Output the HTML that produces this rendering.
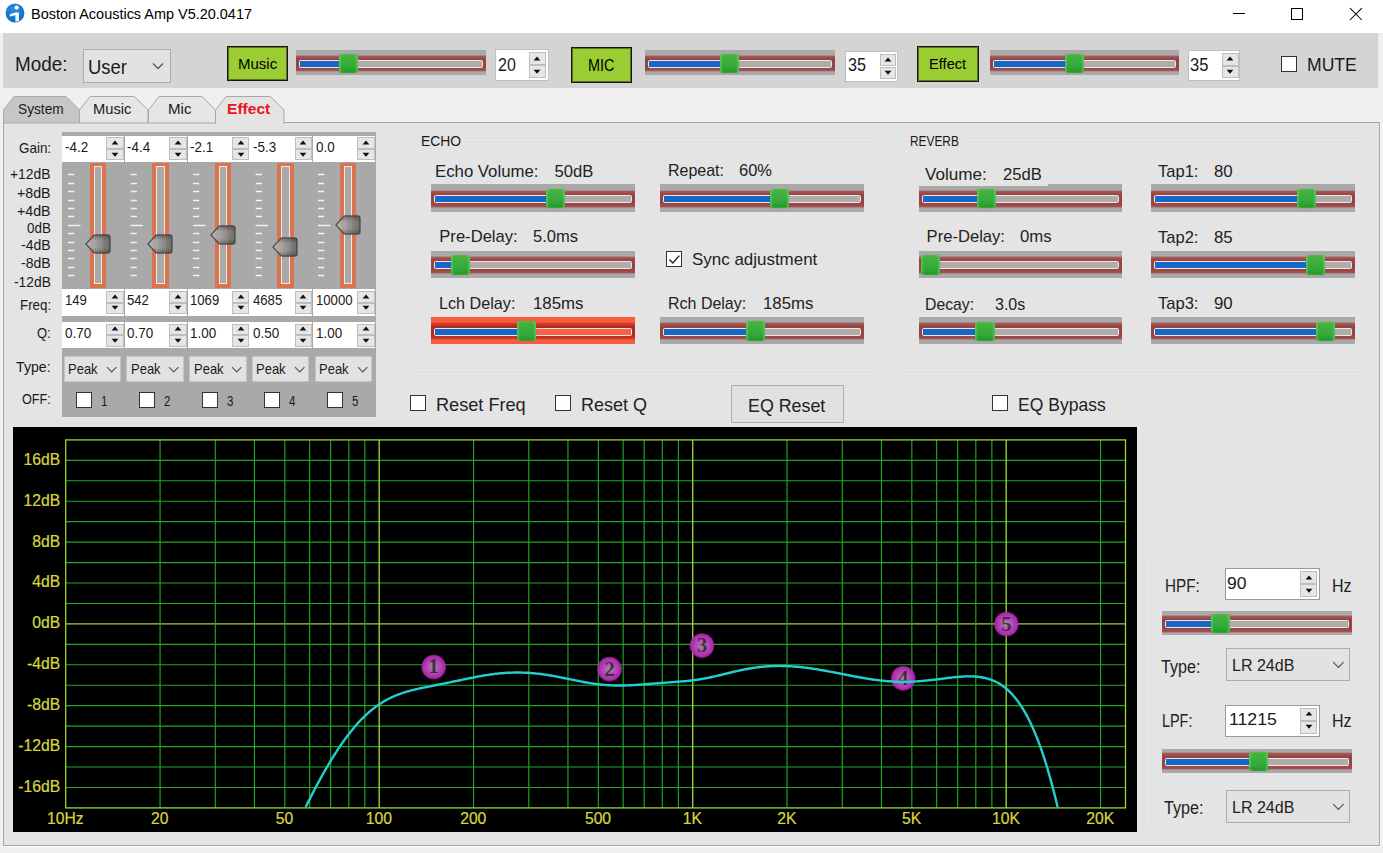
<!DOCTYPE html>
<html lang="en"><head><meta charset="utf-8"><title>Boston Acoustics Amp V5.20.0417</title>
<style>
html,body{margin:0;padding:0;}
body{width:1383px;height:853px;background:#f0f0f0;position:relative;overflow:hidden;font-family:"Liberation Sans", sans-serif;}
#app div,#app svg,#app .t{position:absolute;}
#app svg{overflow:visible;}
.t{white-space:nowrap;transform-origin:0 0;left:0;}
</style></head>
<body><div id="app">
<div style="left:0px;top:0px;width:1383px;height:33px;background:#ffffff;"></div>
<svg style="left:4.8px;top:2.9px" width="20" height="20" viewBox="0 0 20 20">
<defs><radialGradient id="ig" cx="0.45" cy="0.3" r="0.75"><stop offset="0" stop-color="#2c8ee0"/><stop offset="1" stop-color="#0c66c0"/></radialGradient></defs>
<circle cx="10" cy="10" r="9.4" fill="url(#ig)"/>
<circle cx="11.7" cy="4.6" r="2.1" fill="#fff"/>
<path d="M4.6 11.6 L10.2 9.6 L13.9 9.6 L13.9 18.2 L10.4 18.6 L10.4 12.2 L5 13.4 Z" fill="#fff"/>
</svg>
<span class="t" id="t0" style="font-size:14.7px;line-height:14.7px;color:#000;left:31.2px;top:7px;transform:scaleX(0.9842);">Boston Acoustics Amp V5.20.0417</span>
<svg style="left:1220px;top:0" width="163" height="33" viewBox="0 0 163 33">
<path d="M13 13.5 H25" stroke="#000" stroke-width="1" fill="none"/>
<rect x="71.5" y="8.5" width="11" height="11" stroke="#000" stroke-width="1" fill="none"/>
<path d="M130 8.2 L141.8 20 M141.8 8.2 L130 20" stroke="#000" stroke-width="1.05" fill="none"/>
</svg>
<div style="left:3px;top:33px;width:1375px;height:55px;background:#d4d4d4;"></div>
<span class="t" id="t1" style="font-size:21px;line-height:21px;color:#1a1a1a;left:14.7px;top:53px;transform:scaleX(0.8994);">Mode:</span>
<div style="left:83px;top:49px;width:88px;height:34px;background:#e2e2e2;border:1px solid #adadad;box-sizing:border-box;"></div>
<span class="t" id="t2" style="font-size:20.5px;line-height:20.5px;color:#1a1a1a;left:88px;top:57px;transform:scaleX(0.9008);">User</span>
<svg style="left:151px;top:62px" width="14" height="9" viewBox="0 0 14 9"><path d="M2 1.5 L7 6.5 L12 1.5" stroke="#555" stroke-width="1.3" fill="none"/></svg>
<div style="left:227.3px;top:46px;width:61.2px;height:35.4px;background:#9acd32;border:1px solid #161616;box-sizing:border-box;box-shadow:inset 0 0 0 1px rgba(25,25,25,.5);"></div>
<span class="t" id="t3" style="font-size:14.8px;line-height:14.8px;color:#000;left:238px;top:57px;transform:scaleX(1.0145);">Music</span>
<div style="left:571.3px;top:47px;width:60.8px;height:35.7px;background:#9acd32;border:1px solid #161616;box-sizing:border-box;box-shadow:inset 0 0 0 1px rgba(25,25,25,.5);"></div>
<span class="t" id="t4" style="font-size:15.6px;line-height:15.6px;color:#000;left:587.8px;top:58px;transform:scaleX(0.9233);">MIC</span>
<div style="left:917.4px;top:45.6px;width:61.2px;height:36px;background:#9acd32;border:1px solid #161616;box-sizing:border-box;box-shadow:inset 0 0 0 1px rgba(25,25,25,.5);"></div>
<span class="t" id="t5" style="font-size:14.8px;line-height:14.8px;color:#000;left:929px;top:57px;transform:scaleX(0.9899);">Effect</span>
<div style="left:296px;top:50px;width:190px;height:25px;background:#a9a9a9;"></div>
<div style="left:296px;top:55.1px;width:190px;height:16.8px;background:linear-gradient(#a9a9a9 0px,#a55a5a 1.4px,#974343 4.5px,#974343 12.0px,#a25252 15.4px,#a9a9a9 16.8px);"></div>
<div style="left:299.2px;top:59.5px;width:183.6px;height:8.6px;background:#b0acac;border:1px solid #f3e6e0;box-sizing:border-box;border-radius:1.5px;"></div>
<div style="left:300.2px;top:60.5px;width:49px;height:6.6px;background:#1468c8;"></div>
<div style="left:339.2px;top:53.7px;width:19.2px;height:19.4px;background:linear-gradient(#4ab53c 0%,#3bae3e 38%,#33a838 70%,#1f9725 100%);border-radius:3px;box-shadow:inset 1.5px 0 1.5px rgba(120,215,120,.6),inset -1.5px 0 1.5px rgba(120,215,120,.6),0 0 1px rgba(40,120,40,.7);"></div>
<div style="left:495px;top:49.2px;width:53.6px;height:32px;background:#ffffff;border:1px solid #c0c0c0;box-sizing:border-box;"></div>
<div style="left:529px;top:52.2px;width:16.8px;height:13px;background:#e6e6e6;border:1px solid #bebebe;box-sizing:border-box;"></div>
<svg style="left:533.4px;top:55.7px" width="8" height="6" viewBox="533.40 55.70 8 6"><polygon points="534.00,60.20 540.80,60.20 537.40,56.30" fill="#111"/></svg>
<div style="left:529px;top:65.2px;width:16.8px;height:13px;background:#e6e6e6;border:1px solid #bebebe;box-sizing:border-box;"></div>
<svg style="left:533.4px;top:68.7px" width="8" height="6" viewBox="533.40 68.70 8 6"><polygon points="534.00,69.50 540.80,69.50 537.40,73.40" fill="#111"/></svg>
<span class="t" id="t6" style="font-size:17.6px;line-height:17.6px;color:#1a1a1a;left:498.3px;top:57px;transform:scaleX(0.9092);">20</span>
<div style="left:644.6px;top:50px;width:190.4px;height:25px;background:#a9a9a9;"></div>
<div style="left:644.6px;top:55.1px;width:190.4px;height:16.8px;background:linear-gradient(#a9a9a9 0px,#a55a5a 1.4px,#974343 4.5px,#974343 12.0px,#a25252 15.4px,#a9a9a9 16.8px);"></div>
<div style="left:647.8px;top:59.5px;width:184px;height:8.6px;background:#b0acac;border:1px solid #f3e6e0;box-sizing:border-box;border-radius:1.5px;"></div>
<div style="left:648.8px;top:60.5px;width:80.8px;height:6.6px;background:#1468c8;"></div>
<div style="left:719.6px;top:53.7px;width:19.2px;height:19.4px;background:linear-gradient(#4ab53c 0%,#3bae3e 38%,#33a838 70%,#1f9725 100%);border-radius:3px;box-shadow:inset 1.5px 0 1.5px rgba(120,215,120,.6),inset -1.5px 0 1.5px rgba(120,215,120,.6),0 0 1px rgba(40,120,40,.7);"></div>
<div style="left:845.2px;top:50.8px;width:52.4px;height:31.4px;background:#ffffff;border:1px solid #c0c0c0;box-sizing:border-box;"></div>
<div style="left:879.5px;top:53.8px;width:16.8px;height:12.7px;background:#e6e6e6;border:1px solid #bebebe;box-sizing:border-box;"></div>
<svg style="left:883.9px;top:57.15px" width="8" height="6" viewBox="883.90 57.15 8 6"><polygon points="884.50,61.65 891.30,61.65 887.90,57.75" fill="#111"/></svg>
<div style="left:879.5px;top:66.5px;width:16.8px;height:12.7px;background:#e6e6e6;border:1px solid #bebebe;box-sizing:border-box;"></div>
<svg style="left:883.9px;top:69.85px" width="8" height="6" viewBox="883.90 69.85 8 6"><polygon points="884.50,70.65 891.30,70.65 887.90,74.55" fill="#111"/></svg>
<span class="t" id="t7" style="font-size:17.6px;line-height:17.6px;color:#1a1a1a;left:848.4px;top:57px;transform:scaleX(0.9194);">35</span>
<div style="left:989.9px;top:50px;width:189.6px;height:25px;background:#a9a9a9;"></div>
<div style="left:989.9px;top:55.1px;width:189.6px;height:16.8px;background:linear-gradient(#a9a9a9 0px,#a55a5a 1.4px,#974343 4.5px,#974343 12.0px,#a25252 15.4px,#a9a9a9 16.8px);"></div>
<div style="left:993.1px;top:59.5px;width:183.2px;height:8.6px;background:#b0acac;border:1px solid #f3e6e0;box-sizing:border-box;border-radius:1.5px;"></div>
<div style="left:994.1px;top:60.5px;width:80.9px;height:6.6px;background:#1468c8;"></div>
<div style="left:1065px;top:53.7px;width:19.2px;height:19.4px;background:linear-gradient(#4ab53c 0%,#3bae3e 38%,#33a838 70%,#1f9725 100%);border-radius:3px;box-shadow:inset 1.5px 0 1.5px rgba(120,215,120,.6),inset -1.5px 0 1.5px rgba(120,215,120,.6),0 0 1px rgba(40,120,40,.7);"></div>
<div style="left:1187.6px;top:49.8px;width:52.9px;height:31.6px;background:#ffffff;border:1px solid #c0c0c0;box-sizing:border-box;"></div>
<div style="left:1221.8px;top:52.8px;width:16.8px;height:12.8px;background:#e6e6e6;border:1px solid #bebebe;box-sizing:border-box;"></div>
<svg style="left:1226.2px;top:56.2px" width="8" height="6" viewBox="1226.20 56.20 8 6"><polygon points="1226.80,60.70 1233.60,60.70 1230.20,56.80" fill="#111"/></svg>
<div style="left:1221.8px;top:65.6px;width:16.8px;height:12.8px;background:#e6e6e6;border:1px solid #bebebe;box-sizing:border-box;"></div>
<svg style="left:1226.2px;top:69px" width="8" height="6" viewBox="1226.20 69.00 8 6"><polygon points="1226.80,69.80 1233.60,69.80 1230.20,73.70" fill="#111"/></svg>
<span class="t" id="t8" style="font-size:17.6px;line-height:17.6px;color:#1a1a1a;left:1190.4px;top:57px;transform:scaleX(0.9398);">35</span>
<div style="left:1281px;top:56px;width:16px;height:16px;background:#ffffff;border:1px solid #333;box-sizing:border-box;"></div>
<span class="t" id="t9" style="font-size:18.2px;line-height:18.2px;color:#1a1a1a;left:1307px;top:56px;transform:scaleX(0.9664);">MUTE</span>
<div style="left:3px;top:122px;width:1377px;height:724px;background:#e4e4e4;border:1px solid #a6a6a6;box-sizing:border-box;box-shadow:1px 1px 0 #fbfbfb;"></div>
<svg style="left:3px;top:95.5px" width="78" height="28.0" viewBox="0 0 78 28.0"><path d="M0.5,27.0 L0.5,14 L11,0.5 L63,0.5 L76.5,14 L76.5,27.0 Z" fill="#c6c6c6" stroke="#a8a8a8" stroke-width="1"/></svg>
<span class="t" id="t10" style="font-size:14.8px;line-height:14.8px;color:#1a1a1a;left:17.8px;top:102px;transform:scaleX(0.9262);">System</span>
<svg style="left:79px;top:95.5px" width="70.5" height="28.0" viewBox="0 0 70.5 28.0"><path d="M0.5,27.0 L0.5,14 L11,0.5 L55.5,0.5 L69.0,14 L69.0,27.0 Z" fill="#e6e6e6" stroke="#a8a8a8" stroke-width="1"/></svg>
<span class="t" id="t11" style="font-size:14.8px;line-height:14.8px;color:#1a1a1a;left:93.3px;top:102px;transform:scaleX(0.9938);">Music</span>
<svg style="left:147.5px;top:95.5px" width="69.0" height="28.0" viewBox="0 0 69.0 28.0"><path d="M0.5,27.0 L0.5,14 L11,0.5 L54.0,0.5 L67.5,14 L67.5,27.0 Z" fill="#e6e6e6" stroke="#a8a8a8" stroke-width="1"/></svg>
<span class="t" id="t12" style="font-size:14.8px;line-height:14.8px;color:#1a1a1a;left:168px;top:102px;transform:scaleX(1.0210);">Mic</span>
<svg style="left:214.5px;top:95.5px" width="70.5" height="29.0" viewBox="0 0 70.5 29.0"><path d="M0.5,28.0 L0.5,14 L11,0.5 L55.5,0.5 L69.0,14 L69.0,28.0" fill="#e4e4e4" stroke="#a8a8a8" stroke-width="1"/></svg>
<span class="t" id="t13" style="font-size:14.8px;line-height:14.8px;color:#e8141c;font-weight:bold;left:226.7px;top:102px;transform:scaleX(1.0529);">Effect</span>
<div style="left:61.5px;top:132px;width:314.5px;height:284.7px;background:#a9a9a9;"></div>
<span class="t" id="t14" style="font-size:14.8px;line-height:14.8px;color:#1a1a1a;left:18.5px;top:141px;transform:scaleX(0.9074);">Gain:</span>
<span class="t" id="t15" style="font-size:14.8px;line-height:14.8px;color:#1a1a1a;left:19.5px;top:298px;transform:scaleX(0.9002);">Freq:</span>
<span class="t" id="t16" style="font-size:14.8px;line-height:14.8px;color:#1a1a1a;left:36.9px;top:326px;transform:scaleX(0.8768);">Q:</span>
<span class="t" id="t17" style="font-size:14.8px;line-height:14.8px;color:#1a1a1a;left:15.9px;top:360px;transform:scaleX(0.9585);">Type:</span>
<span class="t" id="t18" style="font-size:14.8px;line-height:14.8px;color:#1a1a1a;left:21.7px;top:392px;transform:scaleX(0.8575);">OFF:</span>
<span class="t" id="t19" style="font-size:14.6px;line-height:14.6px;color:#1a1a1a;left:10.1px;top:167px;transform:scaleX(0.9505);">+12dB</span>
<span class="t" id="t20" style="font-size:14.6px;line-height:14.6px;color:#1a1a1a;left:17px;top:186px;transform:scaleX(0.9739);">+8dB</span>
<span class="t" id="t21" style="font-size:14.6px;line-height:14.6px;color:#1a1a1a;left:17px;top:204px;transform:scaleX(0.9739);">+4dB</span>
<span class="t" id="t22" style="font-size:14.6px;line-height:14.6px;color:#1a1a1a;left:26.7px;top:221px;transform:scaleX(0.9203);">0dB</span>
<span class="t" id="t23" style="font-size:14.6px;line-height:14.6px;color:#1a1a1a;left:21px;top:238px;transform:scaleX(0.9602);">-4dB</span>
<span class="t" id="t24" style="font-size:14.6px;line-height:14.6px;color:#1a1a1a;left:21px;top:256px;transform:scaleX(0.9602);">-8dB</span>
<span class="t" id="t25" style="font-size:14.6px;line-height:14.6px;color:#1a1a1a;left:13.7px;top:275px;transform:scaleX(0.9473);">-12dB</span>
<div style="left:62px;top:135.6px;width:62px;height:26.4px;background:#ffffff;box-sizing:border-box;"></div>
<div style="left:106.3px;top:137.1px;width:17.7px;height:11.7px;background:#e6e6e6;border:1px solid #bebebe;box-sizing:border-box;"></div>
<svg style="left:111.15px;top:139.95px" width="8" height="6" viewBox="111.15 139.95 8 6"><polygon points="111.75,144.45 118.55,144.45 115.15,140.55" fill="#111"/></svg>
<div style="left:106.3px;top:148.8px;width:17.7px;height:11.7px;background:#e6e6e6;border:1px solid #bebebe;box-sizing:border-box;"></div>
<svg style="left:111.15px;top:151.65px" width="8" height="6" viewBox="111.15 151.65 8 6"><polygon points="111.75,152.45 118.55,152.45 115.15,156.35" fill="#111"/></svg>
<span class="t" id="t26" style="font-size:15.2px;line-height:15.2px;color:#1a1a1a;left:64.6px;top:139px;transform:scaleX(0.8839);">-4.2</span>
<div style="left:62px;top:289.4px;width:62px;height:26.4px;background:#ffffff;box-sizing:border-box;"></div>
<div style="left:106.3px;top:290.9px;width:17.7px;height:11.7px;background:#e6e6e6;border:1px solid #bebebe;box-sizing:border-box;"></div>
<svg style="left:111.15px;top:293.75px" width="8" height="6" viewBox="111.15 293.75 8 6"><polygon points="111.75,298.25 118.55,298.25 115.15,294.35" fill="#111"/></svg>
<div style="left:106.3px;top:302.6px;width:17.7px;height:11.7px;background:#e6e6e6;border:1px solid #bebebe;box-sizing:border-box;"></div>
<svg style="left:111.15px;top:305.45px" width="8" height="6" viewBox="111.15 305.45 8 6"><polygon points="111.75,306.25 118.55,306.25 115.15,310.15" fill="#111"/></svg>
<span class="t" id="t27" style="font-size:15.2px;line-height:15.2px;color:#1a1a1a;left:64.6px;top:292px;transform:scaleX(0.8656);">149</span>
<div style="left:62px;top:322px;width:62px;height:26px;background:#ffffff;box-sizing:border-box;"></div>
<div style="left:106.3px;top:323.5px;width:17.7px;height:11.5px;background:#e6e6e6;border:1px solid #bebebe;box-sizing:border-box;"></div>
<svg style="left:111.15px;top:326.25px" width="8" height="6" viewBox="111.15 326.25 8 6"><polygon points="111.75,330.75 118.55,330.75 115.15,326.85" fill="#111"/></svg>
<div style="left:106.3px;top:335px;width:17.7px;height:11.5px;background:#e6e6e6;border:1px solid #bebebe;box-sizing:border-box;"></div>
<svg style="left:111.15px;top:337.75px" width="8" height="6" viewBox="111.15 337.75 8 6"><polygon points="111.75,338.55 118.55,338.55 115.15,342.45" fill="#111"/></svg>
<span class="t" id="t28" style="font-size:15.2px;line-height:15.2px;color:#1a1a1a;left:64.6px;top:325px;transform:scaleX(0.8838);">0.70</span>
<div style="left:67.7px;top:173px;width:7px;height:3px;background:rgba(255,255,255,.2);border-radius:1px;"></div>
<div style="left:68.2px;top:174px;width:6px;height:1px;background:#f3f3f3;"></div>
<div style="left:67.7px;top:182px;width:7px;height:3px;background:rgba(255,255,255,.2);border-radius:1px;"></div>
<div style="left:68.2px;top:183px;width:6px;height:1px;background:#f3f3f3;"></div>
<div style="left:67.7px;top:190px;width:7px;height:3px;background:rgba(255,255,255,.2);border-radius:1px;"></div>
<div style="left:68.2px;top:191px;width:6px;height:1px;background:#f3f3f3;"></div>
<div style="left:67.7px;top:199px;width:7px;height:3px;background:rgba(255,255,255,.2);border-radius:1px;"></div>
<div style="left:68.2px;top:200px;width:6px;height:1px;background:#f3f3f3;"></div>
<div style="left:67.7px;top:207px;width:7px;height:3px;background:rgba(255,255,255,.2);border-radius:1px;"></div>
<div style="left:68.2px;top:208px;width:6px;height:1px;background:#f3f3f3;"></div>
<div style="left:67.7px;top:215px;width:7px;height:3px;background:rgba(255,255,255,.2);border-radius:1px;"></div>
<div style="left:68.2px;top:216px;width:6px;height:1px;background:#f3f3f3;"></div>
<div style="left:67.7px;top:224px;width:13px;height:3px;background:rgba(255,255,255,.2);border-radius:1px;"></div>
<div style="left:68.2px;top:225px;width:12px;height:1px;background:#f3f3f3;"></div>
<div style="left:67.7px;top:232px;width:7px;height:3px;background:rgba(255,255,255,.2);border-radius:1px;"></div>
<div style="left:68.2px;top:233px;width:6px;height:1px;background:#f3f3f3;"></div>
<div style="left:67.7px;top:241px;width:7px;height:3px;background:rgba(255,255,255,.2);border-radius:1px;"></div>
<div style="left:68.2px;top:242px;width:6px;height:1px;background:#f3f3f3;"></div>
<div style="left:67.7px;top:249px;width:7px;height:3px;background:rgba(255,255,255,.2);border-radius:1px;"></div>
<div style="left:68.2px;top:250px;width:6px;height:1px;background:#f3f3f3;"></div>
<div style="left:67.7px;top:257px;width:7px;height:3px;background:rgba(255,255,255,.2);border-radius:1px;"></div>
<div style="left:68.2px;top:258px;width:6px;height:1px;background:#f3f3f3;"></div>
<div style="left:67.7px;top:266px;width:7px;height:3px;background:rgba(255,255,255,.2);border-radius:1px;"></div>
<div style="left:68.2px;top:267px;width:6px;height:1px;background:#f3f3f3;"></div>
<div style="left:67.7px;top:274px;width:7px;height:3px;background:rgba(255,255,255,.2);border-radius:1px;"></div>
<div style="left:68.2px;top:275px;width:6px;height:1px;background:#f3f3f3;"></div>
<div style="left:89.9px;top:162.9px;width:16.4px;height:125.3px;background:#dc7350;"></div>
<div style="left:93.8px;top:166px;width:8.6px;height:118px;background:#a9a9a9;border:1px solid #f7e8da;box-sizing:border-box;"></div>
<svg style="left:84.7px;top:233.6px" width="26" height="20" viewBox="0 0 26 20">
<defs><linearGradient id="vg0" x1="0" y1="0" x2="1" y2="0"><stop offset="0" stop-color="#bdbdbd" stop-opacity="0.9"/><stop offset="0.45" stop-color="#9a9a9a" stop-opacity="0.88"/><stop offset="1" stop-color="#666666" stop-opacity="0.93"/></linearGradient>
<linearGradient id="vh0" x1="0" y1="0" x2="0" y2="1"><stop offset="0" stop-color="#000" stop-opacity="0.28"/><stop offset="0.3" stop-color="#000" stop-opacity="0"/><stop offset="0.7" stop-color="#000" stop-opacity="0"/><stop offset="1" stop-color="#000" stop-opacity="0.28"/></linearGradient></defs>
<path d="M1 10 L8.6 1.6 Q9.3 0.9 10.4 0.9 L22.6 0.9 Q25 0.9 25 3.3 L25 16.7 Q25 19.1 22.6 19.1 L10.4 19.1 Q9.3 19.1 8.6 18.4 Z" fill="url(#vg0)"/>
<path d="M1 10 L8.6 1.6 Q9.3 0.9 10.4 0.9 L22.6 0.9 Q25 0.9 25 3.3 L25 16.7 Q25 19.1 22.6 19.1 L10.4 19.1 Q9.3 19.1 8.6 18.4 Z" fill="url(#vh0)" stroke="#3e3e3e" stroke-width="1.3" stroke-opacity="0.85"/></svg>
<div style="left:63.6px;top:355.5px;width:57.6px;height:26.4px;background:#e2e2e2;border:1px solid #c4c4c4;box-sizing:border-box;"></div>
<span class="t" id="t29" style="font-size:15px;line-height:15px;color:#1a1a1a;left:68px;top:361px;transform:scaleX(0.8654);">Peak</span>
<svg style="left:105.5px;top:366px" width="12" height="8" viewBox="0 0 12 8"><path d="M1 1.2 L5.7 5.9 L10.4 1.2" stroke="#555" stroke-width="1.1" fill="none"/></svg>
<div style="left:76.2px;top:392px;width:16px;height:16px;background:#ffffff;border:1px solid #333;box-sizing:border-box;"></div>
<span class="t" id="t30" style="font-size:15px;line-height:15px;color:#1a1a1a;left:101.2px;top:393px;transform:scaleX(0.7670);">1</span>
<div style="left:124.75px;top:135.6px;width:62px;height:26.4px;background:#ffffff;box-sizing:border-box;"></div>
<div style="left:169.05px;top:137.1px;width:17.7px;height:11.7px;background:#e6e6e6;border:1px solid #bebebe;box-sizing:border-box;"></div>
<svg style="left:173.9px;top:139.95px" width="8" height="6" viewBox="173.90 139.95 8 6"><polygon points="174.50,144.45 181.30,144.45 177.90,140.55" fill="#111"/></svg>
<div style="left:169.05px;top:148.8px;width:17.7px;height:11.7px;background:#e6e6e6;border:1px solid #bebebe;box-sizing:border-box;"></div>
<svg style="left:173.9px;top:151.65px" width="8" height="6" viewBox="173.90 151.65 8 6"><polygon points="174.50,152.45 181.30,152.45 177.90,156.35" fill="#111"/></svg>
<span class="t" id="t31" style="font-size:15.2px;line-height:15.2px;color:#1a1a1a;left:127.35px;top:139px;transform:scaleX(0.8839);">-4.4</span>
<div style="left:124.75px;top:289.4px;width:62px;height:26.4px;background:#ffffff;box-sizing:border-box;"></div>
<div style="left:169.05px;top:290.9px;width:17.7px;height:11.7px;background:#e6e6e6;border:1px solid #bebebe;box-sizing:border-box;"></div>
<svg style="left:173.9px;top:293.75px" width="8" height="6" viewBox="173.90 293.75 8 6"><polygon points="174.50,298.25 181.30,298.25 177.90,294.35" fill="#111"/></svg>
<div style="left:169.05px;top:302.6px;width:17.7px;height:11.7px;background:#e6e6e6;border:1px solid #bebebe;box-sizing:border-box;"></div>
<svg style="left:173.9px;top:305.45px" width="8" height="6" viewBox="173.90 305.45 8 6"><polygon points="174.50,306.25 181.30,306.25 177.90,310.15" fill="#111"/></svg>
<span class="t" id="t32" style="font-size:15.2px;line-height:15.2px;color:#1a1a1a;left:127.35px;top:292px;transform:scaleX(0.8656);">542</span>
<div style="left:124.75px;top:322px;width:62px;height:26px;background:#ffffff;box-sizing:border-box;"></div>
<div style="left:169.05px;top:323.5px;width:17.7px;height:11.5px;background:#e6e6e6;border:1px solid #bebebe;box-sizing:border-box;"></div>
<svg style="left:173.9px;top:326.25px" width="8" height="6" viewBox="173.90 326.25 8 6"><polygon points="174.50,330.75 181.30,330.75 177.90,326.85" fill="#111"/></svg>
<div style="left:169.05px;top:335px;width:17.7px;height:11.5px;background:#e6e6e6;border:1px solid #bebebe;box-sizing:border-box;"></div>
<svg style="left:173.9px;top:337.75px" width="8" height="6" viewBox="173.90 337.75 8 6"><polygon points="174.50,338.55 181.30,338.55 177.90,342.45" fill="#111"/></svg>
<span class="t" id="t33" style="font-size:15.2px;line-height:15.2px;color:#1a1a1a;left:127.35px;top:325px;transform:scaleX(0.8838);">0.70</span>
<div style="left:130.2px;top:173px;width:7px;height:3px;background:rgba(255,255,255,.2);border-radius:1px;"></div>
<div style="left:130.7px;top:174px;width:6px;height:1px;background:#f3f3f3;"></div>
<div style="left:130.2px;top:182px;width:7px;height:3px;background:rgba(255,255,255,.2);border-radius:1px;"></div>
<div style="left:130.7px;top:183px;width:6px;height:1px;background:#f3f3f3;"></div>
<div style="left:130.2px;top:190px;width:7px;height:3px;background:rgba(255,255,255,.2);border-radius:1px;"></div>
<div style="left:130.7px;top:191px;width:6px;height:1px;background:#f3f3f3;"></div>
<div style="left:130.2px;top:199px;width:7px;height:3px;background:rgba(255,255,255,.2);border-radius:1px;"></div>
<div style="left:130.7px;top:200px;width:6px;height:1px;background:#f3f3f3;"></div>
<div style="left:130.2px;top:207px;width:7px;height:3px;background:rgba(255,255,255,.2);border-radius:1px;"></div>
<div style="left:130.7px;top:208px;width:6px;height:1px;background:#f3f3f3;"></div>
<div style="left:130.2px;top:215px;width:7px;height:3px;background:rgba(255,255,255,.2);border-radius:1px;"></div>
<div style="left:130.7px;top:216px;width:6px;height:1px;background:#f3f3f3;"></div>
<div style="left:130.2px;top:224px;width:13px;height:3px;background:rgba(255,255,255,.2);border-radius:1px;"></div>
<div style="left:130.7px;top:225px;width:12px;height:1px;background:#f3f3f3;"></div>
<div style="left:130.2px;top:232px;width:7px;height:3px;background:rgba(255,255,255,.2);border-radius:1px;"></div>
<div style="left:130.7px;top:233px;width:6px;height:1px;background:#f3f3f3;"></div>
<div style="left:130.2px;top:241px;width:7px;height:3px;background:rgba(255,255,255,.2);border-radius:1px;"></div>
<div style="left:130.7px;top:242px;width:6px;height:1px;background:#f3f3f3;"></div>
<div style="left:130.2px;top:249px;width:7px;height:3px;background:rgba(255,255,255,.2);border-radius:1px;"></div>
<div style="left:130.7px;top:250px;width:6px;height:1px;background:#f3f3f3;"></div>
<div style="left:130.2px;top:257px;width:7px;height:3px;background:rgba(255,255,255,.2);border-radius:1px;"></div>
<div style="left:130.7px;top:258px;width:6px;height:1px;background:#f3f3f3;"></div>
<div style="left:130.2px;top:266px;width:7px;height:3px;background:rgba(255,255,255,.2);border-radius:1px;"></div>
<div style="left:130.7px;top:267px;width:6px;height:1px;background:#f3f3f3;"></div>
<div style="left:130.2px;top:274px;width:7px;height:3px;background:rgba(255,255,255,.2);border-radius:1px;"></div>
<div style="left:130.7px;top:275px;width:6px;height:1px;background:#f3f3f3;"></div>
<div style="left:152.35px;top:162.9px;width:16.4px;height:125.3px;background:#dc7350;"></div>
<div style="left:156.25px;top:166px;width:8.6px;height:118px;background:#a9a9a9;border:1px solid #f7e8da;box-sizing:border-box;"></div>
<svg style="left:147.15px;top:233.6px" width="26" height="20" viewBox="0 0 26 20">
<defs><linearGradient id="vg1" x1="0" y1="0" x2="1" y2="0"><stop offset="0" stop-color="#bdbdbd" stop-opacity="0.9"/><stop offset="0.45" stop-color="#9a9a9a" stop-opacity="0.88"/><stop offset="1" stop-color="#666666" stop-opacity="0.93"/></linearGradient>
<linearGradient id="vh1" x1="0" y1="0" x2="0" y2="1"><stop offset="0" stop-color="#000" stop-opacity="0.28"/><stop offset="0.3" stop-color="#000" stop-opacity="0"/><stop offset="0.7" stop-color="#000" stop-opacity="0"/><stop offset="1" stop-color="#000" stop-opacity="0.28"/></linearGradient></defs>
<path d="M1 10 L8.6 1.6 Q9.3 0.9 10.4 0.9 L22.6 0.9 Q25 0.9 25 3.3 L25 16.7 Q25 19.1 22.6 19.1 L10.4 19.1 Q9.3 19.1 8.6 18.4 Z" fill="url(#vg1)"/>
<path d="M1 10 L8.6 1.6 Q9.3 0.9 10.4 0.9 L22.6 0.9 Q25 0.9 25 3.3 L25 16.7 Q25 19.1 22.6 19.1 L10.4 19.1 Q9.3 19.1 8.6 18.4 Z" fill="url(#vh1)" stroke="#3e3e3e" stroke-width="1.3" stroke-opacity="0.85"/></svg>
<div style="left:126.35px;top:355.5px;width:57.6px;height:26.4px;background:#e2e2e2;border:1px solid #c4c4c4;box-sizing:border-box;"></div>
<span class="t" id="t34" style="font-size:15px;line-height:15px;color:#1a1a1a;left:130.75px;top:361px;transform:scaleX(0.8654);">Peak</span>
<svg style="left:168.25px;top:366px" width="12" height="8" viewBox="0 0 12 8"><path d="M1 1.2 L5.7 5.9 L10.4 1.2" stroke="#555" stroke-width="1.1" fill="none"/></svg>
<div style="left:138.95px;top:392px;width:16px;height:16px;background:#ffffff;border:1px solid #333;box-sizing:border-box;"></div>
<span class="t" id="t35" style="font-size:15px;line-height:15px;color:#1a1a1a;left:163.95px;top:393px;transform:scaleX(0.7670);">2</span>
<div style="left:187.5px;top:135.6px;width:62px;height:26.4px;background:#ffffff;box-sizing:border-box;"></div>
<div style="left:231.8px;top:137.1px;width:17.7px;height:11.7px;background:#e6e6e6;border:1px solid #bebebe;box-sizing:border-box;"></div>
<svg style="left:236.65px;top:139.95px" width="8" height="6" viewBox="236.65 139.95 8 6"><polygon points="237.25,144.45 244.05,144.45 240.65,140.55" fill="#111"/></svg>
<div style="left:231.8px;top:148.8px;width:17.7px;height:11.7px;background:#e6e6e6;border:1px solid #bebebe;box-sizing:border-box;"></div>
<svg style="left:236.65px;top:151.65px" width="8" height="6" viewBox="236.65 151.65 8 6"><polygon points="237.25,152.45 244.05,152.45 240.65,156.35" fill="#111"/></svg>
<span class="t" id="t36" style="font-size:15.2px;line-height:15.2px;color:#1a1a1a;left:190.1px;top:139px;transform:scaleX(0.8839);">-2.1</span>
<div style="left:187.5px;top:289.4px;width:62px;height:26.4px;background:#ffffff;box-sizing:border-box;"></div>
<div style="left:231.8px;top:290.9px;width:17.7px;height:11.7px;background:#e6e6e6;border:1px solid #bebebe;box-sizing:border-box;"></div>
<svg style="left:236.65px;top:293.75px" width="8" height="6" viewBox="236.65 293.75 8 6"><polygon points="237.25,298.25 244.05,298.25 240.65,294.35" fill="#111"/></svg>
<div style="left:231.8px;top:302.6px;width:17.7px;height:11.7px;background:#e6e6e6;border:1px solid #bebebe;box-sizing:border-box;"></div>
<svg style="left:236.65px;top:305.45px" width="8" height="6" viewBox="236.65 305.45 8 6"><polygon points="237.25,306.25 244.05,306.25 240.65,310.15" fill="#111"/></svg>
<span class="t" id="t37" style="font-size:15.2px;line-height:15.2px;color:#1a1a1a;left:190.1px;top:292px;transform:scaleX(0.8655);">1069</span>
<div style="left:187.5px;top:322px;width:62px;height:26px;background:#ffffff;box-sizing:border-box;"></div>
<div style="left:231.8px;top:323.5px;width:17.7px;height:11.5px;background:#e6e6e6;border:1px solid #bebebe;box-sizing:border-box;"></div>
<svg style="left:236.65px;top:326.25px" width="8" height="6" viewBox="236.65 326.25 8 6"><polygon points="237.25,330.75 244.05,330.75 240.65,326.85" fill="#111"/></svg>
<div style="left:231.8px;top:335px;width:17.7px;height:11.5px;background:#e6e6e6;border:1px solid #bebebe;box-sizing:border-box;"></div>
<svg style="left:236.65px;top:337.75px" width="8" height="6" viewBox="236.65 337.75 8 6"><polygon points="237.25,338.55 244.05,338.55 240.65,342.45" fill="#111"/></svg>
<span class="t" id="t38" style="font-size:15.2px;line-height:15.2px;color:#1a1a1a;left:190.1px;top:325px;transform:scaleX(0.8838);">1.00</span>
<div style="left:192.7px;top:173px;width:7px;height:3px;background:rgba(255,255,255,.2);border-radius:1px;"></div>
<div style="left:193.2px;top:174px;width:6px;height:1px;background:#f3f3f3;"></div>
<div style="left:192.7px;top:182px;width:7px;height:3px;background:rgba(255,255,255,.2);border-radius:1px;"></div>
<div style="left:193.2px;top:183px;width:6px;height:1px;background:#f3f3f3;"></div>
<div style="left:192.7px;top:190px;width:7px;height:3px;background:rgba(255,255,255,.2);border-radius:1px;"></div>
<div style="left:193.2px;top:191px;width:6px;height:1px;background:#f3f3f3;"></div>
<div style="left:192.7px;top:199px;width:7px;height:3px;background:rgba(255,255,255,.2);border-radius:1px;"></div>
<div style="left:193.2px;top:200px;width:6px;height:1px;background:#f3f3f3;"></div>
<div style="left:192.7px;top:207px;width:7px;height:3px;background:rgba(255,255,255,.2);border-radius:1px;"></div>
<div style="left:193.2px;top:208px;width:6px;height:1px;background:#f3f3f3;"></div>
<div style="left:192.7px;top:215px;width:7px;height:3px;background:rgba(255,255,255,.2);border-radius:1px;"></div>
<div style="left:193.2px;top:216px;width:6px;height:1px;background:#f3f3f3;"></div>
<div style="left:192.7px;top:224px;width:13px;height:3px;background:rgba(255,255,255,.2);border-radius:1px;"></div>
<div style="left:193.2px;top:225px;width:12px;height:1px;background:#f3f3f3;"></div>
<div style="left:192.7px;top:232px;width:7px;height:3px;background:rgba(255,255,255,.2);border-radius:1px;"></div>
<div style="left:193.2px;top:233px;width:6px;height:1px;background:#f3f3f3;"></div>
<div style="left:192.7px;top:241px;width:7px;height:3px;background:rgba(255,255,255,.2);border-radius:1px;"></div>
<div style="left:193.2px;top:242px;width:6px;height:1px;background:#f3f3f3;"></div>
<div style="left:192.7px;top:249px;width:7px;height:3px;background:rgba(255,255,255,.2);border-radius:1px;"></div>
<div style="left:193.2px;top:250px;width:6px;height:1px;background:#f3f3f3;"></div>
<div style="left:192.7px;top:257px;width:7px;height:3px;background:rgba(255,255,255,.2);border-radius:1px;"></div>
<div style="left:193.2px;top:258px;width:6px;height:1px;background:#f3f3f3;"></div>
<div style="left:192.7px;top:266px;width:7px;height:3px;background:rgba(255,255,255,.2);border-radius:1px;"></div>
<div style="left:193.2px;top:267px;width:6px;height:1px;background:#f3f3f3;"></div>
<div style="left:192.7px;top:274px;width:7px;height:3px;background:rgba(255,255,255,.2);border-radius:1px;"></div>
<div style="left:193.2px;top:275px;width:6px;height:1px;background:#f3f3f3;"></div>
<div style="left:214.8px;top:162.9px;width:16.4px;height:125.3px;background:#dc7350;"></div>
<div style="left:218.7px;top:166px;width:8.6px;height:118px;background:#a9a9a9;border:1px solid #f7e8da;box-sizing:border-box;"></div>
<svg style="left:209.6px;top:224.9px" width="26" height="20" viewBox="0 0 26 20">
<defs><linearGradient id="vg2" x1="0" y1="0" x2="1" y2="0"><stop offset="0" stop-color="#bdbdbd" stop-opacity="0.9"/><stop offset="0.45" stop-color="#9a9a9a" stop-opacity="0.88"/><stop offset="1" stop-color="#666666" stop-opacity="0.93"/></linearGradient>
<linearGradient id="vh2" x1="0" y1="0" x2="0" y2="1"><stop offset="0" stop-color="#000" stop-opacity="0.28"/><stop offset="0.3" stop-color="#000" stop-opacity="0"/><stop offset="0.7" stop-color="#000" stop-opacity="0"/><stop offset="1" stop-color="#000" stop-opacity="0.28"/></linearGradient></defs>
<path d="M1 10 L8.6 1.6 Q9.3 0.9 10.4 0.9 L22.6 0.9 Q25 0.9 25 3.3 L25 16.7 Q25 19.1 22.6 19.1 L10.4 19.1 Q9.3 19.1 8.6 18.4 Z" fill="url(#vg2)"/>
<path d="M1 10 L8.6 1.6 Q9.3 0.9 10.4 0.9 L22.6 0.9 Q25 0.9 25 3.3 L25 16.7 Q25 19.1 22.6 19.1 L10.4 19.1 Q9.3 19.1 8.6 18.4 Z" fill="url(#vh2)" stroke="#3e3e3e" stroke-width="1.3" stroke-opacity="0.85"/></svg>
<div style="left:189.1px;top:355.5px;width:57.6px;height:26.4px;background:#e2e2e2;border:1px solid #c4c4c4;box-sizing:border-box;"></div>
<span class="t" id="t39" style="font-size:15px;line-height:15px;color:#1a1a1a;left:193.5px;top:361px;transform:scaleX(0.8654);">Peak</span>
<svg style="left:231px;top:366px" width="12" height="8" viewBox="0 0 12 8"><path d="M1 1.2 L5.7 5.9 L10.4 1.2" stroke="#555" stroke-width="1.1" fill="none"/></svg>
<div style="left:201.7px;top:392px;width:16px;height:16px;background:#ffffff;border:1px solid #333;box-sizing:border-box;"></div>
<span class="t" id="t40" style="font-size:15px;line-height:15px;color:#1a1a1a;left:226.7px;top:393px;transform:scaleX(0.7670);">3</span>
<div style="left:250.25px;top:135.6px;width:62px;height:26.4px;background:#ffffff;box-sizing:border-box;"></div>
<div style="left:294.55px;top:137.1px;width:17.7px;height:11.7px;background:#e6e6e6;border:1px solid #bebebe;box-sizing:border-box;"></div>
<svg style="left:299.4px;top:139.95px" width="8" height="6" viewBox="299.40 139.95 8 6"><polygon points="300.00,144.45 306.80,144.45 303.40,140.55" fill="#111"/></svg>
<div style="left:294.55px;top:148.8px;width:17.7px;height:11.7px;background:#e6e6e6;border:1px solid #bebebe;box-sizing:border-box;"></div>
<svg style="left:299.4px;top:151.65px" width="8" height="6" viewBox="299.40 151.65 8 6"><polygon points="300.00,152.45 306.80,152.45 303.40,156.35" fill="#111"/></svg>
<span class="t" id="t41" style="font-size:15.2px;line-height:15.2px;color:#1a1a1a;left:252.85px;top:139px;transform:scaleX(0.8839);">-5.3</span>
<div style="left:250.25px;top:289.4px;width:62px;height:26.4px;background:#ffffff;box-sizing:border-box;"></div>
<div style="left:294.55px;top:290.9px;width:17.7px;height:11.7px;background:#e6e6e6;border:1px solid #bebebe;box-sizing:border-box;"></div>
<svg style="left:299.4px;top:293.75px" width="8" height="6" viewBox="299.40 293.75 8 6"><polygon points="300.00,298.25 306.80,298.25 303.40,294.35" fill="#111"/></svg>
<div style="left:294.55px;top:302.6px;width:17.7px;height:11.7px;background:#e6e6e6;border:1px solid #bebebe;box-sizing:border-box;"></div>
<svg style="left:299.4px;top:305.45px" width="8" height="6" viewBox="299.40 305.45 8 6"><polygon points="300.00,306.25 306.80,306.25 303.40,310.15" fill="#111"/></svg>
<span class="t" id="t42" style="font-size:15.2px;line-height:15.2px;color:#1a1a1a;left:252.85px;top:292px;transform:scaleX(0.8655);">4685</span>
<div style="left:250.25px;top:322px;width:62px;height:26px;background:#ffffff;box-sizing:border-box;"></div>
<div style="left:294.55px;top:323.5px;width:17.7px;height:11.5px;background:#e6e6e6;border:1px solid #bebebe;box-sizing:border-box;"></div>
<svg style="left:299.4px;top:326.25px" width="8" height="6" viewBox="299.40 326.25 8 6"><polygon points="300.00,330.75 306.80,330.75 303.40,326.85" fill="#111"/></svg>
<div style="left:294.55px;top:335px;width:17.7px;height:11.5px;background:#e6e6e6;border:1px solid #bebebe;box-sizing:border-box;"></div>
<svg style="left:299.4px;top:337.75px" width="8" height="6" viewBox="299.40 337.75 8 6"><polygon points="300.00,338.55 306.80,338.55 303.40,342.45" fill="#111"/></svg>
<span class="t" id="t43" style="font-size:15.2px;line-height:15.2px;color:#1a1a1a;left:252.85px;top:325px;transform:scaleX(0.8838);">0.50</span>
<div style="left:255.2px;top:173px;width:7px;height:3px;background:rgba(255,255,255,.2);border-radius:1px;"></div>
<div style="left:255.7px;top:174px;width:6px;height:1px;background:#f3f3f3;"></div>
<div style="left:255.2px;top:182px;width:7px;height:3px;background:rgba(255,255,255,.2);border-radius:1px;"></div>
<div style="left:255.7px;top:183px;width:6px;height:1px;background:#f3f3f3;"></div>
<div style="left:255.2px;top:190px;width:7px;height:3px;background:rgba(255,255,255,.2);border-radius:1px;"></div>
<div style="left:255.7px;top:191px;width:6px;height:1px;background:#f3f3f3;"></div>
<div style="left:255.2px;top:199px;width:7px;height:3px;background:rgba(255,255,255,.2);border-radius:1px;"></div>
<div style="left:255.7px;top:200px;width:6px;height:1px;background:#f3f3f3;"></div>
<div style="left:255.2px;top:207px;width:7px;height:3px;background:rgba(255,255,255,.2);border-radius:1px;"></div>
<div style="left:255.7px;top:208px;width:6px;height:1px;background:#f3f3f3;"></div>
<div style="left:255.2px;top:215px;width:7px;height:3px;background:rgba(255,255,255,.2);border-radius:1px;"></div>
<div style="left:255.7px;top:216px;width:6px;height:1px;background:#f3f3f3;"></div>
<div style="left:255.2px;top:224px;width:13px;height:3px;background:rgba(255,255,255,.2);border-radius:1px;"></div>
<div style="left:255.7px;top:225px;width:12px;height:1px;background:#f3f3f3;"></div>
<div style="left:255.2px;top:232px;width:7px;height:3px;background:rgba(255,255,255,.2);border-radius:1px;"></div>
<div style="left:255.7px;top:233px;width:6px;height:1px;background:#f3f3f3;"></div>
<div style="left:255.2px;top:241px;width:7px;height:3px;background:rgba(255,255,255,.2);border-radius:1px;"></div>
<div style="left:255.7px;top:242px;width:6px;height:1px;background:#f3f3f3;"></div>
<div style="left:255.2px;top:249px;width:7px;height:3px;background:rgba(255,255,255,.2);border-radius:1px;"></div>
<div style="left:255.7px;top:250px;width:6px;height:1px;background:#f3f3f3;"></div>
<div style="left:255.2px;top:257px;width:7px;height:3px;background:rgba(255,255,255,.2);border-radius:1px;"></div>
<div style="left:255.7px;top:258px;width:6px;height:1px;background:#f3f3f3;"></div>
<div style="left:255.2px;top:266px;width:7px;height:3px;background:rgba(255,255,255,.2);border-radius:1px;"></div>
<div style="left:255.7px;top:267px;width:6px;height:1px;background:#f3f3f3;"></div>
<div style="left:255.2px;top:274px;width:7px;height:3px;background:rgba(255,255,255,.2);border-radius:1px;"></div>
<div style="left:255.7px;top:275px;width:6px;height:1px;background:#f3f3f3;"></div>
<div style="left:277.25px;top:162.9px;width:16.4px;height:125.3px;background:#dc7350;"></div>
<div style="left:281.15px;top:166px;width:8.6px;height:118px;background:#a9a9a9;border:1px solid #f7e8da;box-sizing:border-box;"></div>
<svg style="left:272.05px;top:237.4px" width="26" height="20" viewBox="0 0 26 20">
<defs><linearGradient id="vg3" x1="0" y1="0" x2="1" y2="0"><stop offset="0" stop-color="#bdbdbd" stop-opacity="0.9"/><stop offset="0.45" stop-color="#9a9a9a" stop-opacity="0.88"/><stop offset="1" stop-color="#666666" stop-opacity="0.93"/></linearGradient>
<linearGradient id="vh3" x1="0" y1="0" x2="0" y2="1"><stop offset="0" stop-color="#000" stop-opacity="0.28"/><stop offset="0.3" stop-color="#000" stop-opacity="0"/><stop offset="0.7" stop-color="#000" stop-opacity="0"/><stop offset="1" stop-color="#000" stop-opacity="0.28"/></linearGradient></defs>
<path d="M1 10 L8.6 1.6 Q9.3 0.9 10.4 0.9 L22.6 0.9 Q25 0.9 25 3.3 L25 16.7 Q25 19.1 22.6 19.1 L10.4 19.1 Q9.3 19.1 8.6 18.4 Z" fill="url(#vg3)"/>
<path d="M1 10 L8.6 1.6 Q9.3 0.9 10.4 0.9 L22.6 0.9 Q25 0.9 25 3.3 L25 16.7 Q25 19.1 22.6 19.1 L10.4 19.1 Q9.3 19.1 8.6 18.4 Z" fill="url(#vh3)" stroke="#3e3e3e" stroke-width="1.3" stroke-opacity="0.85"/></svg>
<div style="left:251.85px;top:355.5px;width:57.6px;height:26.4px;background:#e2e2e2;border:1px solid #c4c4c4;box-sizing:border-box;"></div>
<span class="t" id="t44" style="font-size:15px;line-height:15px;color:#1a1a1a;left:256.25px;top:361px;transform:scaleX(0.8654);">Peak</span>
<svg style="left:293.75px;top:366px" width="12" height="8" viewBox="0 0 12 8"><path d="M1 1.2 L5.7 5.9 L10.4 1.2" stroke="#555" stroke-width="1.1" fill="none"/></svg>
<div style="left:264.45px;top:392px;width:16px;height:16px;background:#ffffff;border:1px solid #333;box-sizing:border-box;"></div>
<span class="t" id="t45" style="font-size:15px;line-height:15px;color:#1a1a1a;left:289.45px;top:393px;transform:scaleX(0.7670);">4</span>
<div style="left:313px;top:135.6px;width:62px;height:26.4px;background:#ffffff;box-sizing:border-box;"></div>
<div style="left:357.3px;top:137.1px;width:17.7px;height:11.7px;background:#e6e6e6;border:1px solid #bebebe;box-sizing:border-box;"></div>
<svg style="left:362.15px;top:139.95px" width="8" height="6" viewBox="362.15 139.95 8 6"><polygon points="362.75,144.45 369.55,144.45 366.15,140.55" fill="#111"/></svg>
<div style="left:357.3px;top:148.8px;width:17.7px;height:11.7px;background:#e6e6e6;border:1px solid #bebebe;box-sizing:border-box;"></div>
<svg style="left:362.15px;top:151.65px" width="8" height="6" viewBox="362.15 151.65 8 6"><polygon points="362.75,152.45 369.55,152.45 366.15,156.35" fill="#111"/></svg>
<span class="t" id="t46" style="font-size:15.2px;line-height:15.2px;color:#1a1a1a;left:315.6px;top:139px;transform:scaleX(0.8834);">0.0</span>
<div style="left:313px;top:289.4px;width:62px;height:26.4px;background:#ffffff;box-sizing:border-box;"></div>
<div style="left:357.3px;top:290.9px;width:17.7px;height:11.7px;background:#e6e6e6;border:1px solid #bebebe;box-sizing:border-box;"></div>
<svg style="left:362.15px;top:293.75px" width="8" height="6" viewBox="362.15 293.75 8 6"><polygon points="362.75,298.25 369.55,298.25 366.15,294.35" fill="#111"/></svg>
<div style="left:357.3px;top:302.6px;width:17.7px;height:11.7px;background:#e6e6e6;border:1px solid #bebebe;box-sizing:border-box;"></div>
<svg style="left:362.15px;top:305.45px" width="8" height="6" viewBox="362.15 305.45 8 6"><polygon points="362.75,306.25 369.55,306.25 366.15,310.15" fill="#111"/></svg>
<span class="t" id="t47" style="font-size:15.2px;line-height:15.2px;color:#1a1a1a;left:315.6px;top:292px;transform:scaleX(0.8657);">10000</span>
<div style="left:313px;top:322px;width:62px;height:26px;background:#ffffff;box-sizing:border-box;"></div>
<div style="left:357.3px;top:323.5px;width:17.7px;height:11.5px;background:#e6e6e6;border:1px solid #bebebe;box-sizing:border-box;"></div>
<svg style="left:362.15px;top:326.25px" width="8" height="6" viewBox="362.15 326.25 8 6"><polygon points="362.75,330.75 369.55,330.75 366.15,326.85" fill="#111"/></svg>
<div style="left:357.3px;top:335px;width:17.7px;height:11.5px;background:#e6e6e6;border:1px solid #bebebe;box-sizing:border-box;"></div>
<svg style="left:362.15px;top:337.75px" width="8" height="6" viewBox="362.15 337.75 8 6"><polygon points="362.75,338.55 369.55,338.55 366.15,342.45" fill="#111"/></svg>
<span class="t" id="t48" style="font-size:15.2px;line-height:15.2px;color:#1a1a1a;left:315.6px;top:325px;transform:scaleX(0.8838);">1.00</span>
<div style="left:317.7px;top:173px;width:7px;height:3px;background:rgba(255,255,255,.2);border-radius:1px;"></div>
<div style="left:318.2px;top:174px;width:6px;height:1px;background:#f3f3f3;"></div>
<div style="left:317.7px;top:182px;width:7px;height:3px;background:rgba(255,255,255,.2);border-radius:1px;"></div>
<div style="left:318.2px;top:183px;width:6px;height:1px;background:#f3f3f3;"></div>
<div style="left:317.7px;top:190px;width:7px;height:3px;background:rgba(255,255,255,.2);border-radius:1px;"></div>
<div style="left:318.2px;top:191px;width:6px;height:1px;background:#f3f3f3;"></div>
<div style="left:317.7px;top:199px;width:7px;height:3px;background:rgba(255,255,255,.2);border-radius:1px;"></div>
<div style="left:318.2px;top:200px;width:6px;height:1px;background:#f3f3f3;"></div>
<div style="left:317.7px;top:207px;width:7px;height:3px;background:rgba(255,255,255,.2);border-radius:1px;"></div>
<div style="left:318.2px;top:208px;width:6px;height:1px;background:#f3f3f3;"></div>
<div style="left:317.7px;top:215px;width:7px;height:3px;background:rgba(255,255,255,.2);border-radius:1px;"></div>
<div style="left:318.2px;top:216px;width:6px;height:1px;background:#f3f3f3;"></div>
<div style="left:317.7px;top:224px;width:13px;height:3px;background:rgba(255,255,255,.2);border-radius:1px;"></div>
<div style="left:318.2px;top:225px;width:12px;height:1px;background:#f3f3f3;"></div>
<div style="left:317.7px;top:232px;width:7px;height:3px;background:rgba(255,255,255,.2);border-radius:1px;"></div>
<div style="left:318.2px;top:233px;width:6px;height:1px;background:#f3f3f3;"></div>
<div style="left:317.7px;top:241px;width:7px;height:3px;background:rgba(255,255,255,.2);border-radius:1px;"></div>
<div style="left:318.2px;top:242px;width:6px;height:1px;background:#f3f3f3;"></div>
<div style="left:317.7px;top:249px;width:7px;height:3px;background:rgba(255,255,255,.2);border-radius:1px;"></div>
<div style="left:318.2px;top:250px;width:6px;height:1px;background:#f3f3f3;"></div>
<div style="left:317.7px;top:257px;width:7px;height:3px;background:rgba(255,255,255,.2);border-radius:1px;"></div>
<div style="left:318.2px;top:258px;width:6px;height:1px;background:#f3f3f3;"></div>
<div style="left:317.7px;top:266px;width:7px;height:3px;background:rgba(255,255,255,.2);border-radius:1px;"></div>
<div style="left:318.2px;top:267px;width:6px;height:1px;background:#f3f3f3;"></div>
<div style="left:317.7px;top:274px;width:7px;height:3px;background:rgba(255,255,255,.2);border-radius:1px;"></div>
<div style="left:318.2px;top:275px;width:6px;height:1px;background:#f3f3f3;"></div>
<div style="left:339.7px;top:162.9px;width:16.4px;height:125.3px;background:#dc7350;"></div>
<div style="left:343.6px;top:166px;width:8.6px;height:118px;background:#a9a9a9;border:1px solid #f7e8da;box-sizing:border-box;"></div>
<svg style="left:334.5px;top:214.8px" width="26" height="20" viewBox="0 0 26 20">
<defs><linearGradient id="vg4" x1="0" y1="0" x2="1" y2="0"><stop offset="0" stop-color="#bdbdbd" stop-opacity="0.9"/><stop offset="0.45" stop-color="#9a9a9a" stop-opacity="0.88"/><stop offset="1" stop-color="#666666" stop-opacity="0.93"/></linearGradient>
<linearGradient id="vh4" x1="0" y1="0" x2="0" y2="1"><stop offset="0" stop-color="#000" stop-opacity="0.28"/><stop offset="0.3" stop-color="#000" stop-opacity="0"/><stop offset="0.7" stop-color="#000" stop-opacity="0"/><stop offset="1" stop-color="#000" stop-opacity="0.28"/></linearGradient></defs>
<path d="M1 10 L8.6 1.6 Q9.3 0.9 10.4 0.9 L22.6 0.9 Q25 0.9 25 3.3 L25 16.7 Q25 19.1 22.6 19.1 L10.4 19.1 Q9.3 19.1 8.6 18.4 Z" fill="url(#vg4)"/>
<path d="M1 10 L8.6 1.6 Q9.3 0.9 10.4 0.9 L22.6 0.9 Q25 0.9 25 3.3 L25 16.7 Q25 19.1 22.6 19.1 L10.4 19.1 Q9.3 19.1 8.6 18.4 Z" fill="url(#vh4)" stroke="#3e3e3e" stroke-width="1.3" stroke-opacity="0.85"/></svg>
<div style="left:314.6px;top:355.5px;width:57.6px;height:26.4px;background:#e2e2e2;border:1px solid #c4c4c4;box-sizing:border-box;"></div>
<span class="t" id="t49" style="font-size:15px;line-height:15px;color:#1a1a1a;left:319px;top:361px;transform:scaleX(0.8654);">Peak</span>
<svg style="left:356.5px;top:366px" width="12" height="8" viewBox="0 0 12 8"><path d="M1 1.2 L5.7 5.9 L10.4 1.2" stroke="#555" stroke-width="1.1" fill="none"/></svg>
<div style="left:327.2px;top:392px;width:16px;height:16px;background:#ffffff;border:1px solid #333;box-sizing:border-box;"></div>
<span class="t" id="t50" style="font-size:15px;line-height:15px;color:#1a1a1a;left:352.2px;top:393px;transform:scaleX(0.7670);">5</span>
<div style="left:411px;top:141.7px;width:464.5px;height:231.5px;border:1px solid #dedede;box-sizing:border-box;box-shadow:inset 1px 1px 0 #e9e9e9,1px 1px 0 #e9e9e9;"></div>
<div style="left:419px;top:135.7px;width:44px;height:12px;background:#e4e4e4;"></div>
<span class="t" id="t51" style="font-size:15.2px;line-height:15.2px;color:#1a1a1a;left:421px;top:133px;transform:scaleX(0.9114);">ECHO</span>
<div style="left:900.4px;top:141.7px;width:463.5px;height:231.5px;border:1px solid #dedede;box-sizing:border-box;box-shadow:inset 1px 1px 0 #e9e9e9,1px 1px 0 #e9e9e9;"></div>
<div style="left:908.4px;top:135.7px;width:52.8px;height:12px;background:#e4e4e4;"></div>
<span class="t" id="t52" style="font-size:15.2px;line-height:15.2px;color:#1a1a1a;left:910.4px;top:133px;transform:scaleX(0.7812);">REVERB</span>
<span class="t" id="t53" style="font-size:16.6px;line-height:16.6px;color:#222222;left:435.3px;top:164px;transform:scaleX(1.0099);">Echo Volume:</span>
<span class="t" id="t54" style="font-size:16.6px;line-height:16.6px;color:#222222;left:554.6px;top:164px;">50dB</span>
<div style="left:431px;top:184.2px;width:204px;height:27.5px;background:#a9a9a9;"></div>
<div style="left:431px;top:189.7px;width:204px;height:18px;background:linear-gradient(#a9a9a9 0px,#a55a5a 1.4px,#974343 4.5px,#974343 13.2px,#a25252 16.6px,#a9a9a9 18px);"></div>
<div style="left:434.2px;top:195px;width:197.6px;height:8px;background:#b0acac;border:1px solid #f3e6e0;box-sizing:border-box;border-radius:1.5px;"></div>
<div style="left:435.2px;top:196px;width:120.9px;height:6px;background:#1468c8;"></div>
<div style="left:546.1px;top:188.9px;width:19.2px;height:19.4px;background:linear-gradient(#4ab53c 0%,#3bae3e 38%,#33a838 70%,#1f9725 100%);border-radius:3px;box-shadow:inset 1.5px 0 1.5px rgba(120,215,120,.6),inset -1.5px 0 1.5px rgba(120,215,120,.6),0 0 1px rgba(40,120,40,.7);"></div>
<span class="t" id="t55" style="font-size:16.6px;line-height:16.6px;color:#222222;left:439.3px;top:229px;">Pre-Delay:</span>
<span class="t" id="t56" style="font-size:16.6px;line-height:16.6px;color:#222222;left:533px;top:229px;transform:scaleX(0.9959);">5.0ms</span>
<div style="left:431px;top:250.8px;width:204px;height:27.2px;background:#a9a9a9;"></div>
<div style="left:431px;top:256.15px;width:204px;height:18px;background:linear-gradient(#a9a9a9 0px,#a55a5a 1.4px,#974343 4.5px,#974343 13.2px,#a25252 16.6px,#a9a9a9 18px);"></div>
<div style="left:434.2px;top:261.45px;width:197.6px;height:8px;background:#b0acac;border:1px solid #f3e6e0;box-sizing:border-box;border-radius:1.5px;"></div>
<div style="left:435.2px;top:262.45px;width:26px;height:6px;background:#1468c8;"></div>
<div style="left:451.2px;top:255.35px;width:19.2px;height:19.4px;background:linear-gradient(#4ab53c 0%,#3bae3e 38%,#33a838 70%,#1f9725 100%);border-radius:3px;box-shadow:inset 1.5px 0 1.5px rgba(120,215,120,.6),inset -1.5px 0 1.5px rgba(120,215,120,.6),0 0 1px rgba(40,120,40,.7);"></div>
<span class="t" id="t57" style="font-size:16.6px;line-height:16.6px;color:#222222;left:439.3px;top:296px;transform:scaleX(0.9744);">Lch Delay:</span>
<span class="t" id="t58" style="font-size:16.6px;line-height:16.6px;color:#222222;left:533px;top:296px;transform:scaleX(1.0138);">185ms</span>
<div style="left:431px;top:316.7px;width:204px;height:27.5px;background:#fb5c3e;"></div>
<div style="left:431px;top:322.2px;width:204px;height:18px;background:linear-gradient(#fb5c3e 0px,#d2402c 1.4px,#b02a20 4.5px,#b02a20 13.2px,#cc3c2a 16.6px,#fb5c3e 18px);"></div>
<div style="left:434.2px;top:327.5px;width:197.6px;height:8px;background:#fb6042;border:1px solid #f3e6e0;box-sizing:border-box;border-radius:1.5px;"></div>
<div style="left:435.2px;top:328.5px;width:92px;height:6px;background:#1468c8;"></div>
<div style="left:517.2px;top:321.4px;width:19.2px;height:19.4px;background:linear-gradient(#4ab53c 0%,#3bae3e 38%,#33a838 70%,#1f9725 100%);border-radius:3px;box-shadow:inset 1.5px 0 1.5px rgba(120,215,120,.6),inset -1.5px 0 1.5px rgba(120,215,120,.6),0 0 1px rgba(40,120,40,.7);"></div>
<span class="t" id="t59" style="font-size:16.6px;line-height:16.6px;color:#222222;left:667.5px;top:163px;transform:scaleX(0.9634);">Repeat:</span>
<span class="t" id="t60" style="font-size:16.6px;line-height:16.6px;color:#222222;left:739px;top:163px;transform:scaleX(0.9934);">60%</span>
<div style="left:660px;top:184.2px;width:204px;height:27.5px;background:#a9a9a9;"></div>
<div style="left:660px;top:189.7px;width:204px;height:18px;background:linear-gradient(#a9a9a9 0px,#a55a5a 1.4px,#974343 4.5px,#974343 13.2px,#a25252 16.6px,#a9a9a9 18px);"></div>
<div style="left:663.2px;top:195px;width:197.6px;height:8px;background:#b0acac;border:1px solid #f3e6e0;box-sizing:border-box;border-radius:1.5px;"></div>
<div style="left:664.2px;top:196px;width:115.6px;height:6px;background:#1468c8;"></div>
<div style="left:769.8px;top:188.9px;width:19.2px;height:19.4px;background:linear-gradient(#4ab53c 0%,#3bae3e 38%,#33a838 70%,#1f9725 100%);border-radius:3px;box-shadow:inset 1.5px 0 1.5px rgba(120,215,120,.6),inset -1.5px 0 1.5px rgba(120,215,120,.6),0 0 1px rgba(40,120,40,.7);"></div>
<div style="left:666.2px;top:250.8px;width:16.3px;height:16px;background:#ffffff;border:1px solid #333;box-sizing:border-box;"></div>
<svg style="left:666px;top:250.5px" width="17" height="17" viewBox="0 0 17 17"><path d="M3.4 8.6 L6.8 12 L13.4 4.6" stroke="#222" stroke-width="1.4" fill="none"/></svg>
<span class="t" id="t61" style="font-size:16.6px;line-height:16.6px;color:#222222;left:691.5px;top:252px;transform:scaleX(1.0214);">Sync adjustment</span>
<span class="t" id="t62" style="font-size:16.6px;line-height:16.6px;color:#222222;left:667.5px;top:296px;transform:scaleX(0.9636);">Rch Delay:</span>
<span class="t" id="t63" style="font-size:16.6px;line-height:16.6px;color:#222222;left:763px;top:296px;transform:scaleX(1.0138);">185ms</span>
<div style="left:660px;top:316.7px;width:204px;height:27.5px;background:#a9a9a9;"></div>
<div style="left:660px;top:322.2px;width:204px;height:18px;background:linear-gradient(#a9a9a9 0px,#a55a5a 1.4px,#974343 4.5px,#974343 13.2px,#a25252 16.6px,#a9a9a9 18px);"></div>
<div style="left:663.2px;top:327.5px;width:197.6px;height:8px;background:#b0acac;border:1px solid #f3e6e0;box-sizing:border-box;border-radius:1.5px;"></div>
<div style="left:664.2px;top:328.5px;width:92px;height:6px;background:#1468c8;"></div>
<div style="left:746.2px;top:321.4px;width:19.2px;height:19.4px;background:linear-gradient(#4ab53c 0%,#3bae3e 38%,#33a838 70%,#1f9725 100%);border-radius:3px;box-shadow:inset 1.5px 0 1.5px rgba(120,215,120,.6),inset -1.5px 0 1.5px rgba(120,215,120,.6),0 0 1px rgba(40,120,40,.7);"></div>
<span class="t" id="t64" style="font-size:16.6px;line-height:16.6px;color:#222222;left:925.4px;top:167px;transform:scaleX(1.0305);">Volume:</span>
<span class="t" id="t65" style="font-size:16.6px;line-height:16.6px;color:#222222;left:1003px;top:167px;">25dB</span>
<div style="left:919px;top:184.2px;width:203.4px;height:27.5px;background:#a9a9a9;"></div>
<div style="left:919px;top:189.7px;width:203.4px;height:18px;background:linear-gradient(#a9a9a9 0px,#a55a5a 1.4px,#974343 4.5px,#974343 13.2px,#a25252 16.6px,#a9a9a9 18px);"></div>
<div style="left:922.2px;top:195px;width:197px;height:8px;background:#b0acac;border:1px solid #f3e6e0;box-sizing:border-box;border-radius:1.5px;"></div>
<div style="left:923.2px;top:196px;width:63.6px;height:6px;background:#1468c8;"></div>
<div style="left:976.8px;top:188.9px;width:19.2px;height:19.4px;background:linear-gradient(#4ab53c 0%,#3bae3e 38%,#33a838 70%,#1f9725 100%);border-radius:3px;box-shadow:inset 1.5px 0 1.5px rgba(120,215,120,.6),inset -1.5px 0 1.5px rgba(120,215,120,.6),0 0 1px rgba(40,120,40,.7);"></div>
<div style="left:919px;top:183px;width:128.5px;height:2.7px;background:#e4e4e4;"></div>
<span class="t" id="t66" style="font-size:16.6px;line-height:16.6px;color:#222222;left:926.6px;top:229px;">Pre-Delay:</span>
<span class="t" id="t67" style="font-size:16.6px;line-height:16.6px;color:#222222;left:1020.3px;top:229px;transform:scaleX(1.0109);">0ms</span>
<div style="left:919px;top:250.8px;width:203.4px;height:27.2px;background:#a9a9a9;"></div>
<div style="left:919px;top:256.15px;width:203.4px;height:18px;background:linear-gradient(#a9a9a9 0px,#a55a5a 1.4px,#974343 4.5px,#974343 13.2px,#a25252 16.6px,#a9a9a9 18px);"></div>
<div style="left:922.2px;top:261.45px;width:197px;height:8px;background:#b0acac;border:1px solid #f3e6e0;box-sizing:border-box;border-radius:1.5px;"></div>
<div style="left:923.2px;top:262.45px;width:7.6px;height:6px;background:#1468c8;"></div>
<div style="left:920.8px;top:255.35px;width:19.2px;height:19.4px;background:linear-gradient(#4ab53c 0%,#3bae3e 38%,#33a838 70%,#1f9725 100%);border-radius:3px;box-shadow:inset 1.5px 0 1.5px rgba(120,215,120,.6),inset -1.5px 0 1.5px rgba(120,215,120,.6),0 0 1px rgba(40,120,40,.7);"></div>
<span class="t" id="t68" style="font-size:16.6px;line-height:16.6px;color:#222222;left:925.4px;top:297px;transform:scaleX(0.9505);">Decay:</span>
<span class="t" id="t69" style="font-size:16.6px;line-height:16.6px;color:#222222;left:995.3px;top:297px;transform:scaleX(0.9625);">3.0s</span>
<div style="left:919px;top:317px;width:203.4px;height:27.2px;background:#a9a9a9;"></div>
<div style="left:919px;top:322.35px;width:203.4px;height:18px;background:linear-gradient(#a9a9a9 0px,#a55a5a 1.4px,#974343 4.5px,#974343 13.2px,#a25252 16.6px,#a9a9a9 18px);"></div>
<div style="left:922.2px;top:327.65px;width:197px;height:8px;background:#b0acac;border:1px solid #f3e6e0;box-sizing:border-box;border-radius:1.5px;"></div>
<div style="left:923.2px;top:328.65px;width:62.2px;height:6px;background:#1468c8;"></div>
<div style="left:975.4px;top:321.55px;width:19.2px;height:19.4px;background:linear-gradient(#4ab53c 0%,#3bae3e 38%,#33a838 70%,#1f9725 100%);border-radius:3px;box-shadow:inset 1.5px 0 1.5px rgba(120,215,120,.6),inset -1.5px 0 1.5px rgba(120,215,120,.6),0 0 1px rgba(40,120,40,.7);"></div>
<span class="t" id="t70" style="font-size:16.6px;line-height:16.6px;color:#222222;left:1158px;top:164px;transform:scaleX(0.9952);">Tap1:</span>
<span class="t" id="t71" style="font-size:16.6px;line-height:16.6px;color:#222222;left:1214.3px;top:164px;transform:scaleX(1.0125);">80</span>
<div style="left:1151px;top:184.2px;width:204px;height:27.5px;background:#a9a9a9;"></div>
<div style="left:1151px;top:189.7px;width:204px;height:18px;background:linear-gradient(#a9a9a9 0px,#a55a5a 1.4px,#974343 4.5px,#974343 13.2px,#a25252 16.6px,#a9a9a9 18px);"></div>
<div style="left:1154.2px;top:195px;width:197.6px;height:8px;background:#b0acac;border:1px solid #f3e6e0;box-sizing:border-box;border-radius:1.5px;"></div>
<div style="left:1155.2px;top:196px;width:151.5px;height:6px;background:#1468c8;"></div>
<div style="left:1296.7px;top:188.9px;width:19.2px;height:19.4px;background:linear-gradient(#4ab53c 0%,#3bae3e 38%,#33a838 70%,#1f9725 100%);border-radius:3px;box-shadow:inset 1.5px 0 1.5px rgba(120,215,120,.6),inset -1.5px 0 1.5px rgba(120,215,120,.6),0 0 1px rgba(40,120,40,.7);"></div>
<span class="t" id="t72" style="font-size:16.6px;line-height:16.6px;color:#222222;left:1158px;top:230px;transform:scaleX(0.9952);">Tap2:</span>
<span class="t" id="t73" style="font-size:16.6px;line-height:16.6px;color:#222222;left:1214.3px;top:230px;transform:scaleX(1.0125);">85</span>
<div style="left:1151px;top:250.8px;width:204px;height:27.2px;background:#a9a9a9;"></div>
<div style="left:1151px;top:256.15px;width:204px;height:18px;background:linear-gradient(#a9a9a9 0px,#a55a5a 1.4px,#974343 4.5px,#974343 13.2px,#a25252 16.6px,#a9a9a9 18px);"></div>
<div style="left:1154.2px;top:261.45px;width:197.6px;height:8px;background:#b0acac;border:1px solid #f3e6e0;box-sizing:border-box;border-radius:1.5px;"></div>
<div style="left:1155.2px;top:262.45px;width:160.6px;height:6px;background:#1468c8;"></div>
<div style="left:1305.8px;top:255.35px;width:19.2px;height:19.4px;background:linear-gradient(#4ab53c 0%,#3bae3e 38%,#33a838 70%,#1f9725 100%);border-radius:3px;box-shadow:inset 1.5px 0 1.5px rgba(120,215,120,.6),inset -1.5px 0 1.5px rgba(120,215,120,.6),0 0 1px rgba(40,120,40,.7);"></div>
<span class="t" id="t74" style="font-size:16.6px;line-height:16.6px;color:#222222;left:1158px;top:296px;transform:scaleX(0.9952);">Tap3:</span>
<span class="t" id="t75" style="font-size:16.6px;line-height:16.6px;color:#222222;left:1214.3px;top:296px;transform:scaleX(1.0125);">90</span>
<div style="left:1151px;top:317px;width:204px;height:27.2px;background:#a9a9a9;"></div>
<div style="left:1151px;top:322.35px;width:204px;height:18px;background:linear-gradient(#a9a9a9 0px,#a55a5a 1.4px,#974343 4.5px,#974343 13.2px,#a25252 16.6px,#a9a9a9 18px);"></div>
<div style="left:1154.2px;top:327.65px;width:197.6px;height:8px;background:#b0acac;border:1px solid #f3e6e0;box-sizing:border-box;border-radius:1.5px;"></div>
<div style="left:1155.2px;top:328.65px;width:170.4px;height:6px;background:#1468c8;"></div>
<div style="left:1315.6px;top:321.55px;width:19.2px;height:19.4px;background:linear-gradient(#4ab53c 0%,#3bae3e 38%,#33a838 70%,#1f9725 100%);border-radius:3px;box-shadow:inset 1.5px 0 1.5px rgba(120,215,120,.6),inset -1.5px 0 1.5px rgba(120,215,120,.6),0 0 1px rgba(40,120,40,.7);"></div>
<div style="left:409.9px;top:395.1px;width:16px;height:15.6px;background:#ffffff;border:1px solid #333;box-sizing:border-box;"></div>
<span class="t" id="t76" style="font-size:18.6px;line-height:18.6px;color:#222222;left:436px;top:396px;transform:scaleX(0.9752);">Reset Freq</span>
<div style="left:554.5px;top:395.1px;width:16px;height:15.6px;background:#ffffff;border:1px solid #333;box-sizing:border-box;"></div>
<span class="t" id="t77" style="font-size:18.6px;line-height:18.6px;color:#222222;left:580.8px;top:396px;transform:scaleX(0.9677);">Reset Q</span>
<div style="left:731.3px;top:384.5px;width:112.4px;height:38.3px;background:#e1e1e1;border:1px solid #adadad;box-sizing:border-box;"></div>
<span class="t" id="t78" style="font-size:19px;line-height:19px;color:#222222;left:748px;top:396px;transform:scaleX(0.9384);">EQ Reset</span>
<div style="left:992.2px;top:395.1px;width:16px;height:15.6px;background:#ffffff;border:1px solid #333;box-sizing:border-box;"></div>
<span class="t" id="t79" style="font-size:18.4px;line-height:18.4px;color:#222222;left:1018.3px;top:396px;transform:scaleX(0.9533);">EQ Bypass</span>
<div style="left:1145.3px;top:553.1px;width:219.5px;height:277.3px;border:1px solid #dedede;box-sizing:border-box;box-shadow:inset 1px 1px 0 #e9e9e9,1px 1px 0 #e9e9e9;"></div>
<span class="t" id="t80" style="font-size:17.6px;line-height:17.6px;color:#222222;left:1165.2px;top:578px;transform:scaleX(0.8658);">HPF:</span>
<div style="left:1224.8px;top:568.1px;width:95px;height:32.4px;background:#ffffff;border:1px solid #9a9a9a;box-sizing:border-box;"></div>
<div style="left:1300.2px;top:571.1px;width:17px;height:13.2px;background:#e6e6e6;border:1px solid #bebebe;box-sizing:border-box;"></div>
<svg style="left:1304.7px;top:574.7px" width="8" height="6" viewBox="1304.70 574.70 8 6"><polygon points="1305.30,579.20 1312.10,579.20 1308.70,575.30" fill="#111"/></svg>
<div style="left:1300.2px;top:584.3px;width:17px;height:13.2px;background:#e6e6e6;border:1px solid #bebebe;box-sizing:border-box;"></div>
<svg style="left:1304.7px;top:587.9px" width="8" height="6" viewBox="1304.70 587.90 8 6"><polygon points="1305.30,588.70 1312.10,588.70 1308.70,592.60" fill="#111"/></svg>
<span class="t" id="t81" style="font-size:17px;line-height:17px;color:#1a1a1a;left:1227.4px;top:575px;transform:scaleX(1.0306);">90</span>
<span class="t" id="t82" style="font-size:17.6px;line-height:17.6px;color:#222222;left:1332.4px;top:578px;transform:scaleX(0.9110);">Hz</span>
<div style="left:1162px;top:611px;width:190.3px;height:24.4px;background:#a9a9a9;"></div>
<div style="left:1162px;top:614.7px;width:190.3px;height:18px;background:linear-gradient(#a9a9a9 0px,#a55a5a 1.4px,#974343 4.5px,#974343 13.2px,#a25252 16.6px,#a9a9a9 18px);"></div>
<div style="left:1165.2px;top:620px;width:183.9px;height:8px;background:#b0acac;border:1px solid #f3e6e0;box-sizing:border-box;border-radius:1.5px;"></div>
<div style="left:1166.2px;top:621px;width:55px;height:6px;background:#1468c8;"></div>
<div style="left:1211.2px;top:613.9px;width:19.2px;height:19.4px;background:linear-gradient(#4ab53c 0%,#3bae3e 38%,#33a838 70%,#1f9725 100%);border-radius:3px;box-shadow:inset 1.5px 0 1.5px rgba(120,215,120,.6),inset -1.5px 0 1.5px rgba(120,215,120,.6),0 0 1px rgba(40,120,40,.7);"></div>
<span class="t" id="t83" style="font-size:17.6px;line-height:17.6px;color:#222222;left:1160.5px;top:659px;transform:scaleX(0.9156);">Type:</span>
<div style="left:1226px;top:647.5px;width:123.6px;height:33.1px;background:#e2e2e2;border:1px solid #adadad;box-sizing:border-box;"></div>
<span class="t" id="t84" style="font-size:17px;line-height:17px;color:#222222;left:1232px;top:657px;transform:scaleX(0.9430);">LR 24dB</span>
<svg style="left:1331.6px;top:660.55px" width="13" height="9" viewBox="0 0 13 9"><path d="M1.2 1.2 L6.4 6.4 L11.6 1.2" stroke="#555" stroke-width="1.2" fill="none"/></svg>
<span class="t" id="t85" style="font-size:17.6px;line-height:17.6px;color:#222222;left:1161.9px;top:713px;transform:scaleX(0.8182);">LPF:</span>
<div style="left:1224.8px;top:705px;width:95px;height:31.6px;background:#ffffff;border:1px solid #9a9a9a;box-sizing:border-box;"></div>
<div style="left:1300.2px;top:708px;width:17px;height:12.8px;background:#e6e6e6;border:1px solid #bebebe;box-sizing:border-box;"></div>
<svg style="left:1304.7px;top:711.4px" width="8" height="6" viewBox="1304.70 711.40 8 6"><polygon points="1305.30,715.90 1312.10,715.90 1308.70,712.00" fill="#111"/></svg>
<div style="left:1300.2px;top:720.8px;width:17px;height:12.8px;background:#e6e6e6;border:1px solid #bebebe;box-sizing:border-box;"></div>
<svg style="left:1304.7px;top:724.2px" width="8" height="6" viewBox="1304.70 724.20 8 6"><polygon points="1305.30,725.00 1312.10,725.00 1308.70,728.90" fill="#111"/></svg>
<span class="t" id="t86" style="font-size:17px;line-height:17px;color:#1a1a1a;left:1228.8px;top:711px;transform:scaleX(1.0410);">11215</span>
<span class="t" id="t87" style="font-size:17.6px;line-height:17.6px;color:#222222;left:1332.4px;top:713px;transform:scaleX(0.9110);">Hz</span>
<div style="left:1162px;top:748.7px;width:190.3px;height:24.4px;background:#a9a9a9;"></div>
<div style="left:1162px;top:752.4px;width:190.3px;height:18px;background:linear-gradient(#a9a9a9 0px,#a55a5a 1.4px,#974343 4.5px,#974343 13.2px,#a25252 16.6px,#a9a9a9 18px);"></div>
<div style="left:1165.2px;top:757.7px;width:183.9px;height:8px;background:#b0acac;border:1px solid #f3e6e0;box-sizing:border-box;border-radius:1.5px;"></div>
<div style="left:1166.2px;top:758.7px;width:93px;height:6px;background:#1468c8;"></div>
<div style="left:1249.2px;top:751.6px;width:19.2px;height:19.4px;background:linear-gradient(#4ab53c 0%,#3bae3e 38%,#33a838 70%,#1f9725 100%);border-radius:3px;box-shadow:inset 1.5px 0 1.5px rgba(120,215,120,.6),inset -1.5px 0 1.5px rgba(120,215,120,.6),0 0 1px rgba(40,120,40,.7);"></div>
<span class="t" id="t88" style="font-size:17.6px;line-height:17.6px;color:#222222;left:1164.1px;top:800px;transform:scaleX(0.9156);">Type:</span>
<div style="left:1226px;top:789.9px;width:123.6px;height:33.4px;background:#e2e2e2;border:1px solid #adadad;box-sizing:border-box;"></div>
<span class="t" id="t89" style="font-size:17px;line-height:17px;color:#222222;left:1232px;top:799px;transform:scaleX(0.9430);">LR 24dB</span>
<svg style="left:1331.6px;top:803.1px" width="13" height="9" viewBox="0 0 13 9"><path d="M1.2 1.2 L6.4 6.4 L11.6 1.2" stroke="#555" stroke-width="1.2" fill="none"/></svg>
<svg style="left:13px;top:427px" width="1124" height="405" viewBox="13 427 1124 405">
<rect x="13" y="427" width="1124" height="405" fill="#000"/>
<path d="M65.7 787.46 H1125.5" stroke="#22a822" stroke-width="1.15"/>
<path d="M65.7 767.01 H1125.5" stroke="#22a822" stroke-width="1.15"/>
<path d="M65.7 746.57 H1125.5" stroke="#22a822" stroke-width="1.15"/>
<path d="M65.7 726.12 H1125.5" stroke="#22a822" stroke-width="1.15"/>
<path d="M65.7 705.68 H1125.5" stroke="#22a822" stroke-width="1.15"/>
<path d="M65.7 685.23 H1125.5" stroke="#22a822" stroke-width="1.15"/>
<path d="M65.7 664.79 H1125.5" stroke="#22a822" stroke-width="1.15"/>
<path d="M65.7 644.34 H1125.5" stroke="#22a822" stroke-width="1.15"/>
<path d="M65.7 623.90 H1125.5" stroke="#a0d040" stroke-width="1.3"/>
<path d="M65.7 603.46 H1125.5" stroke="#22a822" stroke-width="1.15"/>
<path d="M65.7 583.01 H1125.5" stroke="#22a822" stroke-width="1.15"/>
<path d="M65.7 562.57 H1125.5" stroke="#22a822" stroke-width="1.15"/>
<path d="M65.7 542.12 H1125.5" stroke="#22a822" stroke-width="1.15"/>
<path d="M65.7 521.68 H1125.5" stroke="#22a822" stroke-width="1.15"/>
<path d="M65.7 501.23 H1125.5" stroke="#22a822" stroke-width="1.15"/>
<path d="M65.7 480.79 H1125.5" stroke="#22a822" stroke-width="1.15"/>
<path d="M65.7 460.34 H1125.5" stroke="#22a822" stroke-width="1.15"/>
<path d="M160.07 439.9 V807.9" stroke="#22a822" stroke-width="1.15"/>
<path d="M215.28 439.9 V807.9" stroke="#22a822" stroke-width="1.15"/>
<path d="M254.45 439.9 V807.9" stroke="#22a822" stroke-width="1.15"/>
<path d="M284.83 439.9 V807.9" stroke="#22a822" stroke-width="1.15"/>
<path d="M309.65 439.9 V807.9" stroke="#22a822" stroke-width="1.15"/>
<path d="M330.64 439.9 V807.9" stroke="#22a822" stroke-width="1.15"/>
<path d="M348.82 439.9 V807.9" stroke="#22a822" stroke-width="1.15"/>
<path d="M364.86 439.9 V807.9" stroke="#22a822" stroke-width="1.15"/>
<path d="M379.20 439.9 V807.9" stroke="#98d838" stroke-width="1.35"/>
<path d="M473.57 439.9 V807.9" stroke="#22a822" stroke-width="1.15"/>
<path d="M528.78 439.9 V807.9" stroke="#22a822" stroke-width="1.15"/>
<path d="M567.95 439.9 V807.9" stroke="#22a822" stroke-width="1.15"/>
<path d="M598.33 439.9 V807.9" stroke="#22a822" stroke-width="1.15"/>
<path d="M623.15 439.9 V807.9" stroke="#22a822" stroke-width="1.15"/>
<path d="M644.14 439.9 V807.9" stroke="#22a822" stroke-width="1.15"/>
<path d="M662.32 439.9 V807.9" stroke="#22a822" stroke-width="1.15"/>
<path d="M678.36 439.9 V807.9" stroke="#22a822" stroke-width="1.15"/>
<path d="M692.70 439.9 V807.9" stroke="#98d838" stroke-width="1.35"/>
<path d="M787.07 439.9 V807.9" stroke="#22a822" stroke-width="1.15"/>
<path d="M842.28 439.9 V807.9" stroke="#22a822" stroke-width="1.15"/>
<path d="M881.45 439.9 V807.9" stroke="#22a822" stroke-width="1.15"/>
<path d="M911.83 439.9 V807.9" stroke="#22a822" stroke-width="1.15"/>
<path d="M936.65 439.9 V807.9" stroke="#22a822" stroke-width="1.15"/>
<path d="M957.64 439.9 V807.9" stroke="#22a822" stroke-width="1.15"/>
<path d="M975.82 439.9 V807.9" stroke="#22a822" stroke-width="1.15"/>
<path d="M991.86 439.9 V807.9" stroke="#22a822" stroke-width="1.15"/>
<path d="M1006.20 439.9 V807.9" stroke="#98d838" stroke-width="1.35"/>
<path d="M1100.57 439.9 V807.9" stroke="#22a822" stroke-width="1.15"/>
<rect x="65.7" y="439.9" width="1059.8" height="368.0" fill="none" stroke="#98d838" stroke-width="1.3"/>
<defs><radialGradient id="mk" cx="0.5" cy="0.5" r="0.5"><stop offset="0" stop-color="#a88aa6"/><stop offset="0.5" stop-color="#b04cb0"/><stop offset="0.88" stop-color="#ad24b0"/><stop offset="1" stop-color="#ad24b0" stop-opacity="0.35"/></radialGradient></defs>
<circle cx="433.7" cy="667.0" r="12.6" fill="url(#mk)"/>
<circle cx="609.5" cy="669.1" r="12.6" fill="url(#mk)"/>
<circle cx="702.0" cy="645.6" r="12.6" fill="url(#mk)"/>
<circle cx="903.2" cy="678.3" r="12.6" fill="url(#mk)"/>
<circle cx="1006.4" cy="624.1" r="12.6" fill="url(#mk)"/>
<text x="433.7" y="673.4" text-anchor="middle" font-family="'Liberation Serif', serif" font-weight="bold" font-size="20.5" fill="#2a1c2a" fill-opacity="0.8">1</text>
<text x="609.5" y="675.5" text-anchor="middle" font-family="'Liberation Serif', serif" font-weight="bold" font-size="20.5" fill="#2a1c2a" fill-opacity="0.8">2</text>
<text x="702.0" y="652.0" text-anchor="middle" font-family="'Liberation Serif', serif" font-weight="bold" font-size="20.5" fill="#2a1c2a" fill-opacity="0.8">3</text>
<text x="903.2" y="684.7" text-anchor="middle" font-family="'Liberation Serif', serif" font-weight="bold" font-size="20.5" fill="#2a1c2a" fill-opacity="0.8">4</text>
<text x="1006.4" y="630.5" text-anchor="middle" font-family="'Liberation Serif', serif" font-weight="bold" font-size="20.5" fill="#2a1c2a" fill-opacity="0.8">5</text>
<path d="M305.7 807.0 L306.7 804.9 L307.7 802.9 L308.7 800.9 L309.7 799.0 L310.7 797.0 L311.7 795.1 L312.7 793.1 L313.7 791.2 L314.7 789.3 L315.7 787.4 L316.7 785.5 L317.7 783.6 L318.7 781.8 L319.7 780.0 L320.7 778.1 L321.7 776.3 L322.7 774.5 L323.7 772.8 L324.7 771.0 L325.7 769.3 L326.7 767.5 L327.7 765.8 L328.7 764.1 L329.7 762.5 L330.7 760.8 L331.7 759.2 L332.7 757.6 L333.7 756.0 L334.7 754.4 L335.7 752.8 L336.7 751.3 L337.7 749.7 L338.7 748.2 L339.7 746.7 L340.7 745.3 L341.7 743.8 L342.7 742.4 L343.7 741.0 L344.7 739.6 L345.7 738.2 L346.7 736.9 L347.7 735.6 L348.7 734.2 L349.7 733.0 L350.7 731.7 L351.7 730.5 L352.7 729.2 L353.7 728.0 L354.7 726.8 L355.7 725.7 L356.7 724.5 L357.7 723.4 L358.7 722.3 L359.7 721.2 L360.7 720.2 L361.7 719.2 L362.7 718.1 L363.7 717.1 L364.7 716.2 L365.7 715.2 L366.7 714.3 L367.7 713.4 L368.7 712.5 L369.7 711.6 L370.7 710.8 L371.7 709.9 L372.7 709.1 L373.7 708.4 L374.7 707.6 L375.7 706.8 L376.7 706.1 L377.7 705.4 L378.7 704.7 L379.7 704.0 L380.7 703.4 L381.7 702.7 L382.7 702.1 L383.7 701.5 L384.7 700.9 L385.7 700.4 L386.7 699.8 L387.7 699.3 L388.7 698.7 L389.7 698.2 L390.7 697.8 L391.7 697.3 L392.7 696.8 L393.7 696.4 L394.7 695.9 L395.7 695.5 L396.7 695.1 L397.7 694.7 L398.7 694.3 L399.7 694.0 L400.7 693.6 L401.7 693.3 L402.7 692.9 L403.7 692.6 L404.7 692.3 L405.7 692.0 L406.7 691.7 L407.7 691.4 L408.7 691.1 L409.7 690.8 L410.7 690.6 L411.7 690.3 L412.7 690.1 L413.7 689.8 L414.7 689.6 L415.7 689.3 L416.7 689.1 L417.7 688.9 L418.7 688.6 L419.7 688.4 L420.7 688.2 L421.7 688.0 L422.7 687.8 L423.7 687.6 L424.7 687.4 L425.7 687.2 L426.7 687.0 L427.7 686.8 L428.7 686.6 L429.7 686.4 L430.7 686.2 L431.7 686.0 L432.7 685.8 L433.7 685.6 L434.7 685.4 L435.7 685.2 L436.7 685.0 L437.7 684.8 L438.7 684.6 L439.7 684.4 L440.7 684.2 L441.7 684.0 L442.7 683.8 L443.7 683.6 L444.7 683.4 L445.7 683.2 L446.7 683.0 L447.7 682.8 L448.7 682.6 L449.7 682.4 L450.7 682.2 L451.7 681.9 L452.7 681.7 L453.7 681.5 L454.7 681.3 L455.7 681.1 L456.7 680.9 L457.7 680.7 L458.7 680.5 L459.7 680.3 L460.7 680.1 L461.7 679.8 L462.7 679.6 L463.7 679.4 L464.7 679.2 L465.7 679.0 L466.7 678.8 L467.7 678.6 L468.7 678.4 L469.7 678.2 L470.7 678.0 L471.7 677.8 L472.7 677.6 L473.7 677.4 L474.7 677.2 L475.7 677.0 L476.7 676.8 L477.7 676.6 L478.7 676.4 L479.7 676.2 L480.7 676.1 L481.7 675.9 L482.7 675.7 L483.7 675.5 L484.7 675.4 L485.7 675.2 L486.7 675.1 L487.7 674.9 L488.7 674.8 L489.7 674.6 L490.7 674.5 L491.7 674.3 L492.7 674.2 L493.7 674.1 L494.7 673.9 L495.7 673.8 L496.7 673.7 L497.7 673.6 L498.7 673.5 L499.7 673.4 L500.7 673.3 L501.7 673.2 L502.7 673.1 L503.7 673.0 L504.7 673.0 L505.7 672.9 L506.7 672.8 L507.7 672.8 L508.7 672.7 L509.7 672.7 L510.7 672.6 L511.7 672.6 L512.7 672.6 L513.7 672.5 L514.7 672.5 L515.7 672.5 L516.7 672.5 L517.7 672.5 L518.7 672.5 L519.7 672.5 L520.7 672.5 L521.7 672.6 L522.7 672.6 L523.7 672.6 L524.7 672.7 L525.7 672.7 L526.7 672.7 L527.7 672.8 L528.7 672.9 L529.7 672.9 L530.7 673.0 L531.7 673.1 L532.7 673.2 L533.7 673.3 L534.7 673.4 L535.7 673.5 L536.7 673.6 L537.7 673.7 L538.7 673.8 L539.7 673.9 L540.7 674.0 L541.7 674.2 L542.7 674.3 L543.7 674.4 L544.7 674.6 L545.7 674.7 L546.7 674.9 L547.7 675.0 L548.7 675.2 L549.7 675.4 L550.7 675.5 L551.7 675.7 L552.7 675.9 L553.7 676.0 L554.7 676.2 L555.7 676.4 L556.7 676.6 L557.7 676.8 L558.7 677.0 L559.7 677.2 L560.7 677.4 L561.7 677.6 L562.7 677.8 L563.7 678.0 L564.7 678.2 L565.7 678.4 L566.7 678.6 L567.7 678.8 L568.7 679.0 L569.7 679.2 L570.7 679.4 L571.7 679.6 L572.7 679.8 L573.7 680.0 L574.7 680.2 L575.7 680.4 L576.7 680.6 L577.7 680.8 L578.7 681.0 L579.7 681.2 L580.7 681.4 L581.7 681.6 L582.7 681.8 L583.7 682.0 L584.7 682.2 L585.7 682.4 L586.7 682.5 L587.7 682.7 L588.7 682.9 L589.7 683.0 L590.7 683.2 L591.7 683.4 L592.7 683.5 L593.7 683.7 L594.7 683.8 L595.7 683.9 L596.7 684.1 L597.7 684.2 L598.7 684.3 L599.7 684.4 L600.7 684.6 L601.7 684.7 L602.7 684.8 L603.7 684.9 L604.7 684.9 L605.7 685.0 L606.7 685.1 L607.7 685.2 L608.7 685.2 L609.7 685.3 L610.7 685.3 L611.7 685.4 L612.7 685.4 L613.7 685.5 L614.7 685.5 L615.7 685.5 L616.7 685.5 L617.7 685.5 L618.7 685.5 L619.7 685.5 L620.7 685.5 L621.7 685.5 L622.7 685.5 L623.7 685.5 L624.7 685.5 L625.7 685.4 L626.7 685.4 L627.7 685.4 L628.7 685.3 L629.7 685.3 L630.7 685.2 L631.7 685.2 L632.7 685.1 L633.7 685.1 L634.7 685.0 L635.7 684.9 L636.7 684.9 L637.7 684.8 L638.7 684.7 L639.7 684.7 L640.7 684.6 L641.7 684.5 L642.7 684.4 L643.7 684.4 L644.7 684.3 L645.7 684.2 L646.7 684.1 L647.7 684.0 L648.7 684.0 L649.7 683.9 L650.7 683.8 L651.7 683.7 L652.7 683.6 L653.7 683.6 L654.7 683.5 L655.7 683.4 L656.7 683.3 L657.7 683.2 L658.7 683.2 L659.7 683.1 L660.7 683.0 L661.7 682.9 L662.7 682.9 L663.7 682.8 L664.7 682.7 L665.7 682.6 L666.7 682.6 L667.7 682.5 L668.7 682.4 L669.7 682.4 L670.7 682.3 L671.7 682.2 L672.7 682.1 L673.7 682.1 L674.7 682.0 L675.7 681.9 L676.7 681.8 L677.7 681.8 L678.7 681.7 L679.7 681.6 L680.7 681.5 L681.7 681.4 L682.7 681.4 L683.7 681.3 L684.7 681.2 L685.7 681.1 L686.7 681.0 L687.7 680.9 L688.7 680.8 L689.7 680.7 L690.7 680.5 L691.7 680.4 L692.7 680.3 L693.7 680.2 L694.7 680.0 L695.7 679.9 L696.7 679.8 L697.7 679.6 L698.7 679.5 L699.7 679.3 L700.7 679.2 L701.7 679.0 L702.7 678.8 L703.7 678.6 L704.7 678.5 L705.7 678.3 L706.7 678.1 L707.7 677.9 L708.7 677.7 L709.7 677.5 L710.7 677.3 L711.7 677.0 L712.7 676.8 L713.7 676.6 L714.7 676.4 L715.7 676.2 L716.7 675.9 L717.7 675.7 L718.7 675.4 L719.7 675.2 L720.7 675.0 L721.7 674.7 L722.7 674.5 L723.7 674.2 L724.7 674.0 L725.7 673.7 L726.7 673.5 L727.7 673.3 L728.7 673.0 L729.7 672.8 L730.7 672.5 L731.7 672.3 L732.7 672.0 L733.7 671.8 L734.7 671.6 L735.7 671.3 L736.7 671.1 L737.7 670.9 L738.7 670.7 L739.7 670.4 L740.7 670.2 L741.7 670.0 L742.7 669.8 L743.7 669.6 L744.7 669.4 L745.7 669.2 L746.7 669.0 L747.7 668.8 L748.7 668.7 L749.7 668.5 L750.7 668.3 L751.7 668.2 L752.7 668.0 L753.7 667.8 L754.7 667.7 L755.7 667.6 L756.7 667.4 L757.7 667.3 L758.7 667.2 L759.7 667.0 L760.7 666.9 L761.7 666.8 L762.7 666.7 L763.7 666.6 L764.7 666.5 L765.7 666.5 L766.7 666.4 L767.7 666.3 L768.7 666.3 L769.7 666.2 L770.7 666.1 L771.7 666.1 L772.7 666.1 L773.7 666.0 L774.7 666.0 L775.7 666.0 L776.7 666.0 L777.7 665.9 L778.7 665.9 L779.7 665.9 L780.7 665.9 L781.7 666.0 L782.7 666.0 L783.7 666.0 L784.7 666.0 L785.7 666.0 L786.7 666.1 L787.7 666.1 L788.7 666.2 L789.7 666.2 L790.7 666.3 L791.7 666.4 L792.7 666.4 L793.7 666.5 L794.7 666.6 L795.7 666.7 L796.7 666.7 L797.7 666.8 L798.7 666.9 L799.7 667.0 L800.7 667.1 L801.7 667.2 L802.7 667.3 L803.7 667.5 L804.7 667.6 L805.7 667.7 L806.7 667.8 L807.7 668.0 L808.7 668.1 L809.7 668.2 L810.7 668.4 L811.7 668.5 L812.7 668.7 L813.7 668.8 L814.7 669.0 L815.7 669.1 L816.7 669.3 L817.7 669.4 L818.7 669.6 L819.7 669.8 L820.7 670.0 L821.7 670.1 L822.7 670.3 L823.7 670.5 L824.7 670.7 L825.7 670.8 L826.7 671.0 L827.7 671.2 L828.7 671.4 L829.7 671.6 L830.7 671.8 L831.7 671.9 L832.7 672.1 L833.7 672.3 L834.7 672.5 L835.7 672.7 L836.7 672.9 L837.7 673.1 L838.7 673.3 L839.7 673.5 L840.7 673.7 L841.7 673.9 L842.7 674.1 L843.7 674.3 L844.7 674.5 L845.7 674.7 L846.7 674.9 L847.7 675.1 L848.7 675.3 L849.7 675.5 L850.7 675.7 L851.7 675.9 L852.7 676.0 L853.7 676.2 L854.7 676.4 L855.7 676.6 L856.7 676.8 L857.7 677.0 L858.7 677.2 L859.7 677.3 L860.7 677.5 L861.7 677.7 L862.7 677.9 L863.7 678.0 L864.7 678.2 L865.7 678.4 L866.7 678.5 L867.7 678.7 L868.7 678.9 L869.7 679.0 L870.7 679.2 L871.7 679.3 L872.7 679.5 L873.7 679.6 L874.7 679.7 L875.7 679.9 L876.7 680.0 L877.7 680.1 L878.7 680.3 L879.7 680.4 L880.7 680.5 L881.7 680.6 L882.7 680.7 L883.7 680.8 L884.7 680.9 L885.7 681.0 L886.7 681.1 L887.7 681.2 L888.7 681.2 L889.7 681.3 L890.7 681.4 L891.7 681.4 L892.7 681.5 L893.7 681.6 L894.7 681.6 L895.7 681.7 L896.7 681.7 L897.7 681.7 L898.7 681.8 L899.7 681.8 L900.7 681.8 L901.7 681.8 L902.7 681.8 L903.7 681.8 L904.7 681.8 L905.7 681.8 L906.7 681.8 L907.7 681.8 L908.7 681.7 L909.7 681.7 L910.7 681.7 L911.7 681.6 L912.7 681.6 L913.7 681.6 L914.7 681.5 L915.7 681.4 L916.7 681.4 L917.7 681.3 L918.7 681.2 L919.7 681.2 L920.7 681.1 L921.7 681.0 L922.7 680.9 L923.7 680.8 L924.7 680.7 L925.7 680.6 L926.7 680.5 L927.7 680.4 L928.7 680.3 L929.7 680.2 L930.7 680.1 L931.7 680.0 L932.7 679.9 L933.7 679.8 L934.7 679.6 L935.7 679.5 L936.7 679.4 L937.7 679.3 L938.7 679.2 L939.7 679.0 L940.7 678.9 L941.7 678.8 L942.7 678.6 L943.7 678.5 L944.7 678.4 L945.7 678.3 L946.7 678.1 L947.7 678.0 L948.7 677.9 L949.7 677.8 L950.7 677.7 L951.7 677.6 L952.7 677.4 L953.7 677.3 L954.7 677.2 L955.7 677.1 L956.7 677.0 L957.7 676.9 L958.7 676.9 L959.7 676.8 L960.7 676.7 L961.7 676.6 L962.7 676.6 L963.7 676.5 L964.7 676.5 L965.7 676.4 L966.7 676.4 L967.7 676.4 L968.7 676.4 L969.7 676.4 L970.7 676.4 L971.7 676.4 L972.7 676.4 L973.7 676.5 L974.7 676.5 L975.7 676.6 L976.7 676.7 L977.7 676.8 L978.7 676.9 L979.7 677.0 L980.7 677.2 L981.7 677.3 L982.7 677.5 L983.7 677.7 L984.7 677.9 L985.7 678.2 L986.7 678.4 L987.7 678.7 L988.7 679.0 L989.7 679.3 L990.7 679.7 L991.7 680.0 L992.7 680.4 L993.7 680.8 L994.7 681.3 L995.7 681.8 L996.7 682.3 L997.7 682.8 L998.7 683.3 L999.7 683.9 L1000.7 684.6 L1001.7 685.2 L1002.7 685.9 L1003.7 686.6 L1004.7 687.4 L1005.7 688.2 L1006.7 689.0 L1007.7 689.9 L1008.7 690.8 L1009.7 691.8 L1010.7 692.8 L1011.7 693.8 L1012.7 694.9 L1013.7 696.1 L1014.7 697.2 L1015.7 698.5 L1016.7 699.7 L1017.7 701.1 L1018.7 702.4 L1019.7 703.9 L1020.7 705.4 L1021.7 706.9 L1022.7 708.5 L1023.7 710.1 L1024.7 711.8 L1025.7 713.6 L1026.7 715.4 L1027.7 717.3 L1028.7 719.3 L1029.7 721.3 L1030.7 723.3 L1031.7 725.5 L1032.7 727.7 L1033.7 730.0 L1034.7 732.3 L1035.7 734.7 L1036.7 737.2 L1037.7 739.7 L1038.7 742.4 L1039.7 745.1 L1040.7 747.8 L1041.7 750.7 L1042.7 753.6 L1043.7 756.6 L1044.7 759.7 L1045.7 762.9 L1046.7 766.1 L1047.7 769.4 L1048.7 772.8 L1049.7 776.3 L1050.7 779.9 L1051.7 783.6 L1052.7 787.3 L1053.7 791.2 L1054.7 795.1 L1055.7 799.1 L1056.7 803.3 L1057.7 807.5" fill="none" stroke="#22cfcf" stroke-width="2.4" stroke-linejoin="round"/>
</svg>
<span class="t" id="t90" style="font-size:15.7px;line-height:15.7px;color:#d6d63c;-webkit-text-stroke:0.22px #d6d63c;left:18.33px;top:779px;">-16dB</span>
<span class="t" id="t91" style="font-size:15.7px;line-height:15.7px;color:#d6d63c;-webkit-text-stroke:0.22px #d6d63c;left:18.33px;top:738px;">-12dB</span>
<span class="t" id="t92" style="font-size:15.7px;line-height:15.7px;color:#d6d63c;-webkit-text-stroke:0.22px #d6d63c;left:27.06px;top:697px;">-8dB</span>
<span class="t" id="t93" style="font-size:15.7px;line-height:15.7px;color:#d6d63c;-webkit-text-stroke:0.22px #d6d63c;left:27.06px;top:656px;">-4dB</span>
<span class="t" id="t94" style="font-size:15.7px;line-height:15.7px;color:#d6d63c;-webkit-text-stroke:0.22px #d6d63c;left:32.28px;top:615px;">0dB</span>
<span class="t" id="t95" style="font-size:15.7px;line-height:15.7px;color:#d6d63c;-webkit-text-stroke:0.22px #d6d63c;left:32.28px;top:574px;">4dB</span>
<span class="t" id="t96" style="font-size:15.7px;line-height:15.7px;color:#d6d63c;-webkit-text-stroke:0.22px #d6d63c;left:32.28px;top:534px;">8dB</span>
<span class="t" id="t97" style="font-size:15.7px;line-height:15.7px;color:#d6d63c;-webkit-text-stroke:0.22px #d6d63c;left:23.56px;top:493px;">12dB</span>
<span class="t" id="t98" style="font-size:15.7px;line-height:15.7px;color:#d6d63c;-webkit-text-stroke:0.22px #d6d63c;left:23.56px;top:452px;">16dB</span>
<span class="t" id="t99" style="font-size:15.7px;line-height:15.7px;color:#d6d63c;-webkit-text-stroke:0.22px #d6d63c;left:47.09px;top:811px;">10Hz</span>
<span class="t" id="t100" style="font-size:15.7px;line-height:15.7px;color:#d6d63c;-webkit-text-stroke:0.22px #d6d63c;left:151.05px;top:811px;">20</span>
<span class="t" id="t101" style="font-size:15.7px;line-height:15.7px;color:#d6d63c;-webkit-text-stroke:0.22px #d6d63c;left:275.8px;top:811px;">50</span>
<span class="t" id="t102" style="font-size:15.7px;line-height:15.7px;color:#d6d63c;-webkit-text-stroke:0.22px #d6d63c;left:365.81px;top:811px;">100</span>
<span class="t" id="t103" style="font-size:15.7px;line-height:15.7px;color:#d6d63c;-webkit-text-stroke:0.22px #d6d63c;left:460.18px;top:811px;">200</span>
<span class="t" id="t104" style="font-size:15.7px;line-height:15.7px;color:#d6d63c;-webkit-text-stroke:0.22px #d6d63c;left:584.93px;top:811px;">500</span>
<span class="t" id="t105" style="font-size:15.7px;line-height:15.7px;color:#d6d63c;-webkit-text-stroke:0.22px #d6d63c;left:682.8px;top:811px;">1K</span>
<span class="t" id="t106" style="font-size:15.7px;line-height:15.7px;color:#d6d63c;-webkit-text-stroke:0.22px #d6d63c;left:777.17px;top:811px;">2K</span>
<span class="t" id="t107" style="font-size:15.7px;line-height:15.7px;color:#d6d63c;-webkit-text-stroke:0.22px #d6d63c;left:901.93px;top:811px;">5K</span>
<span class="t" id="t108" style="font-size:15.7px;line-height:15.7px;color:#d6d63c;-webkit-text-stroke:0.22px #d6d63c;left:991.94px;top:811px;">10K</span>
<span class="t" id="t109" style="font-size:15.7px;line-height:15.7px;color:#d6d63c;-webkit-text-stroke:0.22px #d6d63c;left:1086.31px;top:811px;">20K</span>
</div></body></html>
